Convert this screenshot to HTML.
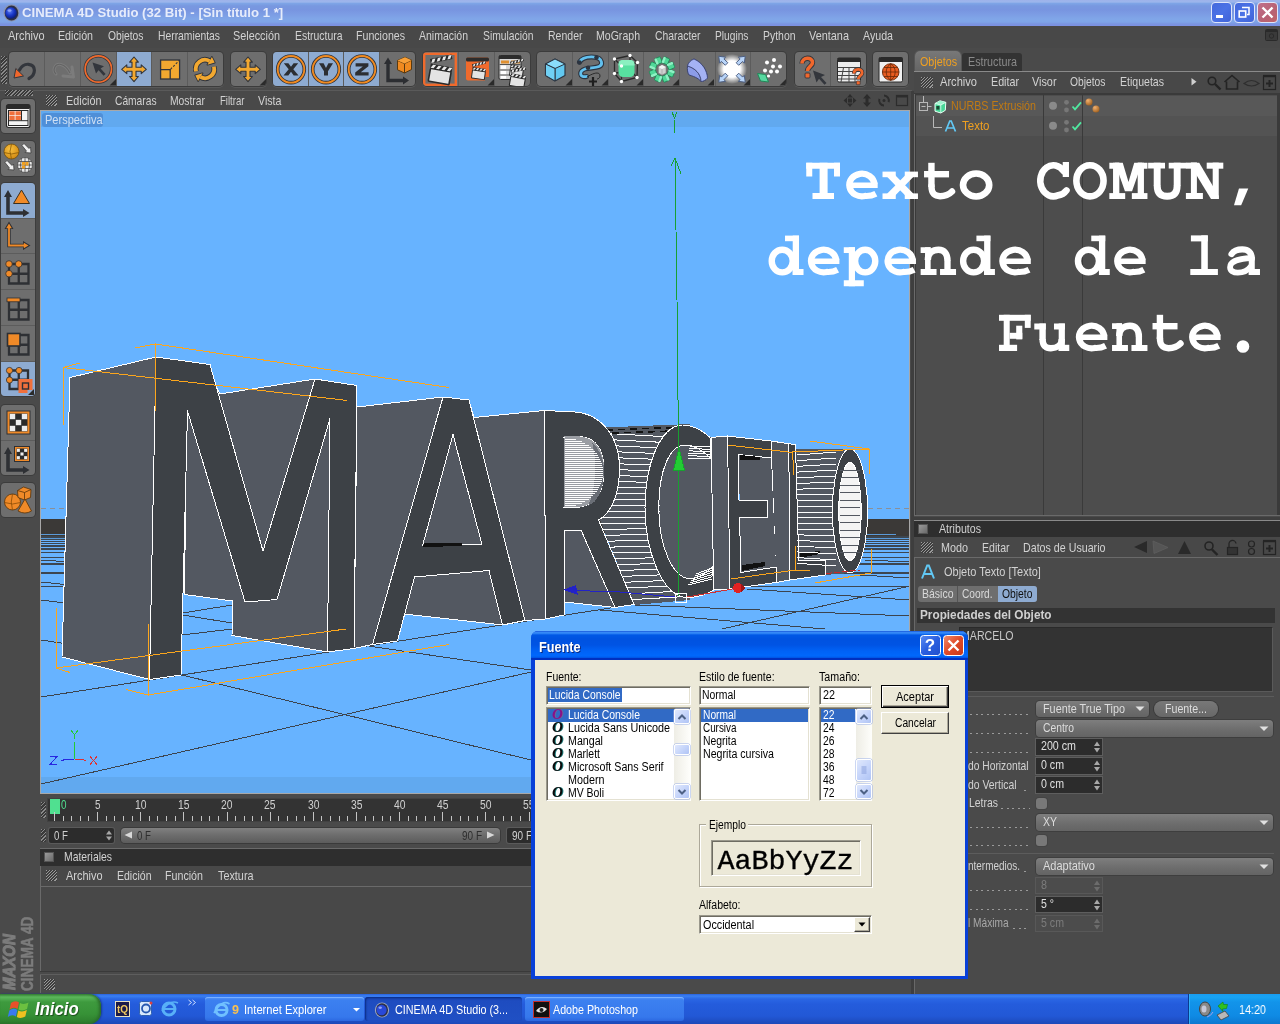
<!DOCTYPE html>
<html><head><meta charset="utf-8">
<style>
*{box-sizing:border-box;margin:0;padding:0}
html,body{width:1280px;height:1024px;overflow:hidden;background:#4a4a4a;font-family:"Liberation Sans",sans-serif;font-size:12px;color:#d0d0d0}
.a{position:absolute}
.t{position:absolute;white-space:nowrap;line-height:14px;font-size:12px;transform-origin:0 50%;transform:scaleX(.92);color:#d0d0d0}
svg{position:absolute;overflow:visible}
#root{position:absolute;left:0;top:0;width:1280px;height:1024px;will-change:transform}
</style></head><body><div id="root">
<!-- TITLE -->
<div class="a" style="left:0;top:0;width:1280px;height:26px;background:linear-gradient(#9eb2ea 0,#9cb6ec 2px,#7ea4e6 3.500px,#7898e0 6px,#7895e0 10px,#7c9ce4 14px,#80a6e8 19px,#7ea4e8 22px,#7a94e0 24px,#7c90e4 26px)"></div>
<svg style="left:3px;top:4px" width="17" height="18" viewBox="0 0 17 18"><defs><radialGradient id="gi" cx=".4" cy=".35" r=".7"><stop offset="0" stop-color="#5a7af0"/><stop offset=".5" stop-color="#1a38c8"/><stop offset="1" stop-color="#081870"/></radialGradient></defs><ellipse cx="8.5" cy="9" rx="8" ry="8.5" fill="#8c93a8"/><ellipse cx="8.5" cy="9" rx="6.8" ry="7.5" fill="#2a2f48"/><circle cx="8" cy="9" r="5.8" fill="url(#gi)"/><ellipse cx="6.5" cy="6.5" rx="2" ry="1.3" fill="#a8b8ff" opacity=".7"/></svg>
<div class="t" style="left:22px;top:4.8px;font-size:13px;line-height:15px;color:#e6ecfb;font-weight:bold;transform:scaleX(1.012);">CINEMA 4D Studio (32 Bit) - [Sin título 1 *]</div>
<div class="a" style="left:1211px;top:2px;width:21px;height:21px;border:1px solid #dfe6fa;border-radius:4px;background:linear-gradient(135deg,#4468dc,#4a72e6 50%,#3f62d8)"></div><svg style="left:1211px;top:2px" width="21" height="21" viewBox="0 0 21 21"><rect x="5" y="13" width="7" height="3" fill="#fff"/></svg>
<div class="a" style="left:1234px;top:2px;width:21px;height:21px;border:1px solid #dfe6fa;border-radius:4px;background:linear-gradient(135deg,#4468dc,#4a72e6 50%,#3f62d8)"></div><svg style="left:1234px;top:2px" width="21" height="21" viewBox="0 0 21 21"><path d="M8,5.5 h7 v7 h-2" fill="none" stroke="#fff" stroke-width="1.5"/><rect x="5.2" y="9" width="6.5" height="6" fill="none" stroke="#fff" stroke-width="1.6"/></svg>
<div class="a" style="left:1257px;top:2px;width:21px;height:21px;border:1px solid #dfe6fa;border-radius:4px;background:linear-gradient(135deg,#c0708a,#b86274 60%,#c06468)"></div><svg style="left:1257px;top:2px" width="21" height="21" viewBox="0 0 21 21"><path d="M5.5,5.5 L15.5,15.5 M15.5,5.5 L5.5,15.5" stroke="#fff" stroke-width="2.4"/></svg>
<!-- MENUBAR -->
<div class="a" style="left:0px;top:26px;width:1280px;height:22px;background:#484848;"></div>
<div class="t" style="left:8px;top:28.3px;font-size:13px;line-height:15px;color:#d2d2d2;transform:scaleX(0.842);">Archivo</div>
<div class="t" style="left:58px;top:28.3px;font-size:13px;line-height:15px;color:#d2d2d2;transform:scaleX(0.821);">Edición</div>
<div class="t" style="left:107.5px;top:28.3px;font-size:13px;line-height:15px;color:#d2d2d2;transform:scaleX(0.792);">Objetos</div>
<div class="t" style="left:157.5px;top:28.3px;font-size:13px;line-height:15px;color:#d2d2d2;transform:scaleX(0.794);">Herramientas</div>
<div class="t" style="left:233px;top:28.3px;font-size:13px;line-height:15px;color:#d2d2d2;transform:scaleX(0.833);">Selección</div>
<div class="t" style="left:294.5px;top:28.3px;font-size:13px;line-height:15px;color:#d2d2d2;transform:scaleX(0.802);">Estructura</div>
<div class="t" style="left:356px;top:28.3px;font-size:13px;line-height:15px;color:#d2d2d2;transform:scaleX(0.817);">Funciones</div>
<div class="t" style="left:419px;top:28.3px;font-size:13px;line-height:15px;color:#d2d2d2;transform:scaleX(0.807);">Animación</div>
<div class="t" style="left:482.5px;top:28.3px;font-size:13px;line-height:15px;color:#d2d2d2;transform:scaleX(0.794);">Simulación</div>
<div class="t" style="left:547.5px;top:28.3px;font-size:13px;line-height:15px;color:#d2d2d2;transform:scaleX(0.809);">Render</div>
<div class="t" style="left:596px;top:28.3px;font-size:13px;line-height:15px;color:#d2d2d2;transform:scaleX(0.812);">MoGraph</div>
<div class="t" style="left:654.5px;top:28.3px;font-size:13px;line-height:15px;color:#d2d2d2;transform:scaleX(0.797);">Character</div>
<div class="t" style="left:714.5px;top:28.3px;font-size:13px;line-height:15px;color:#d2d2d2;transform:scaleX(0.785);">Plugins</div>
<div class="t" style="left:762.5px;top:28.3px;font-size:13px;line-height:15px;color:#d2d2d2;transform:scaleX(0.803);">Python</div>
<div class="t" style="left:809px;top:28.3px;font-size:13px;line-height:15px;color:#d2d2d2;transform:scaleX(0.838);">Ventana</div>
<div class="t" style="left:863px;top:28.3px;font-size:13px;line-height:15px;color:#d2d2d2;transform:scaleX(0.819);">Ayuda</div>
<svg style="left:1265px;top:29px" width="13" height="12" viewBox="0 0 13 12"><rect x="0.5" y="0.5" width="12" height="11" rx="1" fill="#3a3a3a" stroke="#2a2a2a"/><rect x="1" y="1" width="11" height="2" fill="#2a2a2a"/><circle cx="6.5" cy="7" r="2.2" fill="none" stroke="#2a2a2a"/></svg>
<!-- TOOLBAR -->
<div class="a" style="left:1px;top:56px;width:6px;height:28px;background:repeating-linear-gradient(135deg,#8a8a8a 0,#8a8a8a 1px,#3a3a3a 1px,#3a3a3a 2.5px)"></div>
<div class="a" style="left:9.4px;top:52px;width:213.6px;height:34px;border-radius:4px;background:#6e6e6e;box-shadow:0 0 0 1px #3c3c3c,0 1px 0 1px #585858;overflow:hidden">
<svg style="left:0px;top:0" width="36" height="34" viewBox="0 0 36 34"><path d="M20,26.5 C27,23 27.5,13 19.5,12.3 C15,12 12,15 10.5,18" fill="none" stroke="#33363c" stroke-width="3.2" stroke-linecap="round"/><path d="M6.8,16.5 L14.5,24 L5,26 Z" fill="#f0672c" stroke="#33363c" stroke-width="1"/></svg>
<div class="a" style="left:35.1px;top:0;width:1px;height:34px;background:#5c5c5c"></div>
<svg style="left:35.6px;top:0" width="36" height="34" viewBox="0 0 36 34"><path d="M11,22 C7,18 10,11 16,12.5 C20,13.5 23,17 25,21 M27,15 L28.5,25 L18,24" fill="none" stroke="#7c7c7c" stroke-width="3" stroke-linecap="round" stroke-linejoin="round"/><path d="M11,22 C7,18 10,11 16,12.5 C20,13.5 23,17 25,21" fill="none" stroke="#646464" stroke-width="1.2"/></svg>
<div class="a" style="left:70.7px;top:0;width:1px;height:34px;background:#5c5c5c"></div>
<svg style="left:71.2px;top:0" width="36" height="34" viewBox="0 0 36 34"><circle cx="17.3" cy="17" r="13.2" fill="none" stroke="#33363c" stroke-width="3.2"/><circle cx="17.3" cy="17" r="13.2" fill="none" stroke="#f06a2c" stroke-width="1.7"/><path d="M11.5,10.5 L23,14.2 L19.6,16.4 L24.6,22 L22.6,23.8 L17.6,18.2 L15,21.5 Z" fill="#33363c"/><path d="M35,27 L35,33.5 L28.5,33.5 Z" fill="#2a2a2a"/></svg>
<div class="a" style="left:106.8px;top:0;width:35.6px;height:34px;background:#8eabd1"></div>
<div class="a" style="left:106.3px;top:0;width:1px;height:34px;background:#5c5c5c"></div>
<svg style="left:106.8px;top:0" width="36" height="34" viewBox="0 0 36 34"><g transform="translate(18,17.3)"><path d="M0,-12.3 L4.4,-7.2 L2,-7.2 L2,-2 L7.2,-2 L7.2,-4.4 L12.3,0 L7.2,4.4 L7.2,2 L2,2 L2,7.2 L4.4,7.2 L0,12.3 L-4.4,7.2 L-2,7.2 L-2,2 L-7.2,2 L-7.2,4.4 L-12.3,0 L-7.2,-4.4 L-7.2,-2 L-2,-2 L-2,-7.2 L-4.4,-7.2 Z" fill="#f2a830" stroke="#30343c" stroke-width="1.1" stroke-linejoin="round"/></g></svg>
<div class="a" style="left:141.9px;top:0;width:1px;height:34px;background:#5c5c5c"></div>
<svg style="left:142.4px;top:0" width="36" height="34" viewBox="0 0 36 34"><rect x="8.6" y="8" width="19" height="19" fill="#f2a830" stroke="#30343c" stroke-width="1.3"/><path d="M8.6,17.6 h9.6 v9.4" fill="none" stroke="#30343c" stroke-width="1.3"/><path d="M18.5,17.3 L27.3,8.4" stroke="#30343c" stroke-width="1.1" stroke-dasharray="2.2 1.6"/></svg>
<div class="a" style="left:177.5px;top:0;width:1px;height:34px;background:#5c5c5c"></div>
<svg style="left:178px;top:0" width="36" height="34" viewBox="0 0 36 34"><path d="M9.11,19.38 A9.2,9.2 0 0,1 22.60,9.03 M26.89,14.62 A9.2,9.2 0 0,1 13.40,24.97" fill="none" stroke="#30343c" stroke-width="5.600"/><path d="M24.90,5.05 L27.70,10.59 L20.50,12.67 Z M11.10,28.95 L8.30,23.41 L15.50,21.33 Z" fill="#30343c" stroke="#30343c" stroke-width="1.800" stroke-linejoin="round"/><path d="M9.11,19.38 A9.2,9.2 0 0,1 22.60,9.03 M26.89,14.62 A9.2,9.2 0 0,1 13.40,24.97" fill="none" stroke="#f2a830" stroke-width="3.800"/><path d="M24.90,5.05 L27.70,10.59 L20.50,12.67 Z M11.10,28.95 L8.30,23.41 L15.50,21.33 Z" fill="#f2a830"/></svg>
</div>
<div class="a" style="left:230.5px;top:52px;width:35.6px;height:34px;border-radius:4px;background:#6e6e6e;box-shadow:0 0 0 1px #3c3c3c,0 1px 0 1px #585858;overflow:hidden">
<svg style="left:0px;top:0" width="36" height="34" viewBox="0 0 36 34"><g transform="translate(17,17.3)"><path d="M0,-12.3 L4.4,-7.2 L2,-7.2 L2,-2 L7.2,-2 L7.2,-4.4 L12.3,0 L7.2,4.4 L7.2,2 L2,2 L2,7.2 L4.4,7.2 L0,12.3 L-4.4,7.2 L-2,7.2 L-2,2 L-7.2,2 L-7.2,4.4 L-12.3,0 L-7.2,-4.4 L-7.2,-2 L-2,-2 L-2,-7.2 L-4.4,-7.2 Z" fill="#f2a830" stroke="#30343c" stroke-width="1.1" stroke-linejoin="round"/></g><path d="M35,27 L35,33.5 L28.5,33.5 Z" fill="#2a2a2a"/></svg>
</div>
<div class="a" style="left:272.8px;top:52px;width:142.4px;height:34px;border-radius:4px;background:#6e6e6e;box-shadow:0 0 0 1px #3c3c3c,0 1px 0 1px #585858;overflow:hidden">
<div class="a" style="left:0px;top:0;width:35.6px;height:34px;background:#8eabd1"></div>
<svg style="left:0px;top:0" width="36" height="34" viewBox="0 0 36 34"><circle cx="18" cy="17.3" r="13.3" fill="none" stroke="#30343c" stroke-width="3.6"/><circle cx="18" cy="17.3" r="13.3" fill="none" stroke="#f08a20" stroke-width="1.9"/><path d="M10.8,11.2 h4.6 l2.6,3.6 l2.6,-3.6 h4.6 l-4.9,6 l5.2,6.4 h-4.8 l-2.7,-3.9 l-2.7,3.9 h-4.8 l5.2,-6.4 Z" fill="#2c2e32"/></svg>
<div class="a" style="left:35.6px;top:0;width:35.6px;height:34px;background:#8eabd1"></div>
<div class="a" style="left:35.1px;top:0;width:1px;height:34px;background:#5c5c5c"></div>
<svg style="left:35.6px;top:0" width="36" height="34" viewBox="0 0 36 34"><circle cx="18" cy="17.3" r="13.3" fill="none" stroke="#30343c" stroke-width="3.6"/><circle cx="18" cy="17.3" r="13.3" fill="none" stroke="#f08a20" stroke-width="1.9"/><path d="M11,11.2 h4.6 l2.4,4.8 l2.4,-4.8 h4.6 l-5,8 v4.4 h-4 v-4.4 Z" fill="#2c2e32"/></svg>
<div class="a" style="left:71.2px;top:0;width:35.6px;height:34px;background:#8eabd1"></div>
<div class="a" style="left:70.7px;top:0;width:1px;height:34px;background:#5c5c5c"></div>
<svg style="left:71.2px;top:0" width="36" height="34" viewBox="0 0 36 34"><circle cx="18" cy="17.3" r="13.3" fill="none" stroke="#30343c" stroke-width="3.6"/><circle cx="18" cy="17.3" r="13.3" fill="none" stroke="#f08a20" stroke-width="1.9"/><path d="M11.6,11.2 h12.8 v3 l-7.6,6 h7.8 v3.4 h-13.4 v-3 l7.6,-6 h-7.2 Z" fill="#2c2e32"/></svg>
<div class="a" style="left:106.3px;top:0;width:1px;height:34px;background:#5c5c5c"></div>
<svg style="left:106.8px;top:0" width="36" height="34" viewBox="0 0 36 34"><path d="M8,11 v17.5 h16" fill="none" stroke="#2c2e32" stroke-width="3.4"/><path d="M8,5.5 L12,12 L4,12 Z M29,28.5 L23,32.5 L23,24.5 Z" fill="#2c2e32"/><path d="M17.5,8.5 L25,5.2 L31.5,8.2 L31.5,17.5 L24.5,21 L17.5,17.8 Z" fill="#f08a20" stroke="#5a3a10" stroke-width="1" stroke-linejoin="round"/><path d="M17.5,8.5 L24.5,11.6 L31.5,8.2 M24.5,11.6 L24.5,21" fill="none" stroke="#5a3a10" stroke-width="1"/><path d="M17.5,8.5 L25,5.2 L31.5,8.2 L24.5,11.6 Z" fill="#f8a038"/></svg>
</div>
<div class="a" style="left:423px;top:52px;width:106.8px;height:34px;border-radius:4px;background:#6e6e6e;box-shadow:0 0 0 1px #3c3c3c,0 1px 0 1px #585858;overflow:hidden">
<svg style="left:0px;top:0" width="36" height="34" viewBox="0 0 36 34"><rect x="1.2" y="1.8" width="31.6" height="31" fill="none" stroke="#f06a2c" stroke-width="2.4"/><g transform="translate(17,20) scale(1) rotate(10)"><rect x="-10" y="-2" width="21" height="13" rx="1" fill="#e4e4e4" stroke="#2a2a2a" stroke-width="1.6"/><rect x="-10.5" y="-6.5" width="22" height="4.5" fill="#2a2a2a"/><path d="M-8,-6 l3,0 l-2,3.5 l-3,0 Z M-2.5,-6 l3,0 l-2,3.5 l-3,0 Z M3,-6 l3,0 l-2,3.5 l-3,0 Z M8.5,-6 l3,0 l-2,3.5 l-3,0 Z" fill="#e8e8e8"/><g transform="rotate(-22 -10 -7)"><rect x="-10.5" y="-11.5" width="22" height="4.5" fill="#2a2a2a"/><path d="M-8,-11 l3,0 l-2,3.5 l-3,0 Z M-2.5,-11 l3,0 l-2,3.5 l-3,0 Z M3,-11 l3,0 l-2,3.5 l-3,0 Z M8.5,-11 l3,0 l-2,3.5 l-3,0 Z" fill="#e8e8e8"/></g></g></svg>
<div class="a" style="left:35.1px;top:0;width:1px;height:34px;background:#5c5c5c"></div>
<svg style="left:35.6px;top:0" width="36" height="34" viewBox="0 0 36 34"><rect x="7" y="5.5" width="23" height="23" rx="2" fill="#f06a2c"/><rect x="7" y="5.5" width="23" height="4" rx="1.5" fill="#2c2c2c"/><g transform="translate(19.5,20) scale(0.62) rotate(8)"><rect x="-10" y="-2" width="21" height="13" rx="1" fill="#e4e4e4" stroke="#2a2a2a" stroke-width="1.6"/><rect x="-10.5" y="-6.5" width="22" height="4.5" fill="#2a2a2a"/><path d="M-8,-6 l3,0 l-2,3.5 l-3,0 Z M-2.5,-6 l3,0 l-2,3.5 l-3,0 Z M3,-6 l3,0 l-2,3.5 l-3,0 Z M8.5,-6 l3,0 l-2,3.5 l-3,0 Z" fill="#e8e8e8"/><g transform="rotate(-22 -10 -7)"><rect x="-10.5" y="-11.5" width="22" height="4.5" fill="#2a2a2a"/><path d="M-8,-11 l3,0 l-2,3.5 l-3,0 Z M-2.5,-11 l3,0 l-2,3.5 l-3,0 Z M3,-11 l3,0 l-2,3.5 l-3,0 Z M8.5,-11 l3,0 l-2,3.5 l-3,0 Z" fill="#e8e8e8"/></g></g><path d="M26,25 h4 v4 h-4 Z" fill="#6e6e6e"/><path d="M35,27 L35,33.5 L28.5,33.5 Z" fill="#2a2a2a"/></svg>
<div class="a" style="left:70.7px;top:0;width:1px;height:34px;background:#5c5c5c"></div>
<svg style="left:71.2px;top:0" width="36" height="34" viewBox="0 0 36 34"><rect x="5" y="3.5" width="22" height="24" rx="1.5" fill="#d8d8d8" stroke="#2c2c2c" stroke-width="1"/><rect x="5" y="3.5" width="22" height="3.5" fill="#2c2c2c"/><rect x="7" y="8.5" width="8" height="3" fill="#e09030"/><rect x="17" y="8.5" width="9" height="3" fill="#c07820"/><rect x="7" y="13.5" width="5" height="3.4" fill="#fff"/><rect x="7" y="19" width="5" height="3.4" fill="#fff"/><rect x="7" y="24" width="5" height="2.6" fill="#fff"/><path d="M5.5,12.5 h21 M5.5,18 h21 M5.5,23 h21" stroke="#555" stroke-width="1"/><g transform="translate(22.5,17.5) scale(0.62) rotate(8)"><rect x="-10" y="-2" width="21" height="13" rx="1" fill="#e4e4e4" stroke="#2a2a2a" stroke-width="1.6"/><rect x="-10.5" y="-6.5" width="22" height="4.5" fill="#2a2a2a"/><path d="M-8,-6 l3,0 l-2,3.5 l-3,0 Z M-2.5,-6 l3,0 l-2,3.5 l-3,0 Z M3,-6 l3,0 l-2,3.5 l-3,0 Z M8.5,-6 l3,0 l-2,3.5 l-3,0 Z" fill="#e8e8e8"/><g transform="rotate(-22 -10 -7)"><rect x="-10.5" y="-11.5" width="22" height="4.5" fill="#2a2a2a"/><path d="M-8,-11 l3,0 l-2,3.5 l-3,0 Z M-2.5,-11 l3,0 l-2,3.5 l-3,0 Z M3,-11 l3,0 l-2,3.5 l-3,0 Z M8.5,-11 l3,0 l-2,3.5 l-3,0 Z" fill="#e8e8e8"/></g></g><g transform="translate(23.5,27) scale(0.7) rotate(10)"><rect x="-10" y="-2" width="21" height="13" rx="1" fill="#e4e4e4" stroke="#2a2a2a" stroke-width="1.6"/><rect x="-10.5" y="-6.5" width="22" height="4.5" fill="#2a2a2a"/><path d="M-8,-6 l3,0 l-2,3.5 l-3,0 Z M-2.5,-6 l3,0 l-2,3.5 l-3,0 Z M3,-6 l3,0 l-2,3.5 l-3,0 Z M8.5,-6 l3,0 l-2,3.5 l-3,0 Z" fill="#e8e8e8"/><g transform="rotate(-22 -10 -7)"><rect x="-10.5" y="-11.5" width="22" height="4.5" fill="#2a2a2a"/><path d="M-8,-11 l3,0 l-2,3.5 l-3,0 Z M-2.5,-11 l3,0 l-2,3.5 l-3,0 Z M3,-11 l3,0 l-2,3.5 l-3,0 Z M8.5,-11 l3,0 l-2,3.5 l-3,0 Z" fill="#e8e8e8"/></g></g></svg>
</div>
<div class="a" style="left:537px;top:52px;width:249.2px;height:34px;border-radius:4px;background:#6e6e6e;box-shadow:0 0 0 1px #3c3c3c,0 1px 0 1px #585858;overflow:hidden">
<svg style="left:0px;top:0" width="36" height="34" viewBox="0 0 36 34"><path d="M8.5,12 L18,7 L28,12 L28,23.5 L18,29 L8.5,23.5 Z" fill="#62c8f0" stroke="#2c3440" stroke-width="1.2" stroke-linejoin="round"/><path d="M8.5,12 L18,7 L28,12 L18,16.5 Z" fill="#8adcfa" stroke="#2c3440" stroke-width="1" stroke-linejoin="round"/><path d="M18,16.5 V29" stroke="#2c3440" stroke-width="1"/><path d="M8.5,12 L18,16.5 L18,29 L8.5,23.5 Z" fill="#70d0f4" stroke="#2c3440" stroke-width="1" stroke-linejoin="round"/><path d="M35,27 L35,33.5 L28.5,33.5 Z" fill="#2a2a2a"/></svg>
<div class="a" style="left:35.1px;top:0;width:1px;height:34px;background:#5c5c5c"></div>
<svg style="left:35.6px;top:0" width="36" height="34" viewBox="0 0 36 34"><path d="M6.5,10 C10,3.5 27,3 28.5,10 C30,17 18,15 12,17 C6,19 6,26 13.5,24.5" fill="none" stroke="#2c3440" stroke-width="5" stroke-linecap="round"/><path d="M6.5,10 C10,3.5 27,3 28.5,10 C30,17 18,15 12,17 C6,19 6,26 13.5,24.5" fill="none" stroke="#62c0ee" stroke-width="2.8" stroke-linecap="round"/><circle cx="6.5" cy="10.5" r="2.3" fill="#2c3440"/><circle cx="23.5" cy="5.5" r="2.3" fill="#2c3440"/><circle cx="15" cy="15.8" r="2.3" fill="#2c3440"/><path d="M14,25 C20,21 27,19 27,24 C27,26 25,27 24,27" fill="none" stroke="#2a2a2a" stroke-width="1"/><path d="M20,25 v9 M16,29.5 h8" stroke="#1e1e1e" stroke-width="2.2"/><path d="M35,27 L35,33.5 L28.5,33.5 Z" fill="#2a2a2a"/></svg>
<div class="a" style="left:70.7px;top:0;width:1px;height:34px;background:#5c5c5c"></div>
<svg style="left:71.2px;top:0" width="36" height="34" viewBox="0 0 36 34"><path d="M6.5,7 L22,3.5 L29.5,10.5 L29,25.5 L13.5,29.5 L6.5,21.5 Z M6.5,7 L13.5,14 L29.5,10.5 M13.5,14 L13.5,29.5 M22,3.5 L22,18 L29,25.5 M22,18 L6.5,21.5" fill="none" stroke="#2a2a2a" stroke-width="1.3"/><rect x="10.5" y="8" width="16" height="17" rx="4.5" fill="#58e0a0"/><path d="M10.5,12 q0,-4 4.5,-4 h7 q4.500,0 4.500,4.500 v1 h-16 Z" fill="#8af0c0"/><g fill="#fff"><circle cx="6.500" cy="7" r="1.7"/><circle cx="22" cy="3.500" r="1.700"/><circle cx="29.500" cy="10.500" r="1.7"/><circle cx="13.500" cy="14" r="1.7"/><circle cx="6.5" cy="21.5" r="1.7"/><circle cx="13.5" cy="29.5" r="1.7"/><circle cx="29" cy="25.500" r="1.7"/></g><path d="M35,27 L35,33.5 L28.5,33.5 Z" fill="#2a2a2a"/></svg>
<div class="a" style="left:106.3px;top:0;width:1px;height:34px;background:#5c5c5c"></div>
<svg style="left:106.8px;top:0" width="36" height="34" viewBox="0 0 36 34"><g transform="translate(26.7866,21.1118) rotate(22)"><rect x="-3.2" y="-3.2" width="6.4" height="6.4" rx="1" fill="#50d898" stroke="#208858" stroke-width=".8"/><rect x="-3.2" y="-3.2" width="6.4" height="2.4" rx="1" fill="#90f0c4"/></g><g transform="translate(21.6592,26.267) rotate(67)"><rect x="-3.2" y="-3.2" width="6.4" height="6.4" rx="1" fill="#50d898" stroke="#208858" stroke-width=".8"/><rect x="-3.2" y="-3.2" width="6.4" height="2.4" rx="1" fill="#90f0c4"/></g><g transform="translate(14.3882,26.2866) rotate(112)"><rect x="-3.2" y="-3.2" width="6.4" height="6.4" rx="1" fill="#50d898" stroke="#208858" stroke-width=".8"/><rect x="-3.2" y="-3.2" width="6.4" height="2.4" rx="1" fill="#90f0c4"/></g><g transform="translate(9.23297,21.1591) rotate(157)"><rect x="-3.2" y="-3.2" width="6.4" height="6.4" rx="1" fill="#50d898" stroke="#208858" stroke-width=".8"/><rect x="-3.2" y="-3.2" width="6.4" height="2.4" rx="1" fill="#90f0c4"/></g><g transform="translate(9.21339,13.8881) rotate(202)"><rect x="-3.2" y="-3.2" width="6.4" height="6.4" rx="1" fill="#50d898" stroke="#208858" stroke-width=".8"/><rect x="-3.2" y="-3.2" width="6.4" height="2.4" rx="1" fill="#90f0c4"/></g><g transform="translate(14.3409,8.73296) rotate(247)"><rect x="-3.2" y="-3.2" width="6.4" height="6.4" rx="1" fill="#50d898" stroke="#208858" stroke-width=".8"/><rect x="-3.2" y="-3.2" width="6.4" height="2.4" rx="1" fill="#90f0c4"/></g><g transform="translate(21.6119,8.7134) rotate(292)"><rect x="-3.2" y="-3.2" width="6.4" height="6.4" rx="1" fill="#50d898" stroke="#208858" stroke-width=".8"/><rect x="-3.2" y="-3.2" width="6.4" height="2.4" rx="1" fill="#90f0c4"/></g><g transform="translate(26.7671,13.8409) rotate(337)"><rect x="-3.2" y="-3.2" width="6.4" height="6.4" rx="1" fill="#50d898" stroke="#208858" stroke-width=".8"/><rect x="-3.2" y="-3.2" width="6.4" height="2.4" rx="1" fill="#90f0c4"/></g><path d="M14.500,15 L18,13 L22,15 L22,21 L18,23 L14.500,21 Z" fill="#d0d0d0" stroke="#888" stroke-width=".6"/><path d="M14.500,15 L18,13 L22,15 L18,17 Z" fill="#f4f4f4"/><path d="M18,17 v6" stroke="#999" stroke-width=".6"/><path d="M35,27 L35,33.5 L28.5,33.5 Z" fill="#2a2a2a"/></svg>
<div class="a" style="left:141.9px;top:0;width:1px;height:34px;background:#5c5c5c"></div>
<svg style="left:142.4px;top:0" width="36" height="34" viewBox="0 0 36 34"><path d="M8.500,14 C9,11 12,8 15,7 C24,11 28,19 28.500,26 C27,28 24,29.500 22,29.500 C20,27 17,25 10,23 C8.500,21 8,17 8.500,14 Z" fill="#8c9ce8" stroke="#3c4470" stroke-width="1" stroke-linejoin="round"/><path d="M8.500,14 C16,16 22,22 22,29.500" fill="none" stroke="#3c4470" stroke-width="1"/><path d="M8.500,14 C9,11 12,8 15,7 C24,11 28,19 28.500,26 C27,28 24,29.500 22,29.500 C22,22 16,16 8.500,14 Z" fill="#a4b2f4" stroke="#3c4470" stroke-width=".8"/><path d="M35,27 L35,33.5 L28.5,33.5 Z" fill="#2a2a2a"/></svg>
<div class="a" style="left:177.5px;top:0;width:1px;height:34px;background:#5c5c5c"></div>
<svg style="left:178px;top:0" width="36" height="34" viewBox="0 0 36 34"><defs><radialGradient id="gw"><stop offset="0" stop-color="#fff"/><stop offset=".55" stop-color="#fff"/><stop offset="1" stop-color="#fff" stop-opacity="0"/></radialGradient></defs><circle cx="17" cy="17" r="15" fill="url(#gw)"/><g transform="translate(8,8.5) rotate(-45)"><path d="M0,-6 L4.2,-0.5 L1.8,-0.5 L1.8,5 L-1.8,5 L-1.8,-0.5 L-4.2,-0.5 Z" fill="#b8d4f8" stroke="#4a5c80" stroke-width=".9" stroke-linejoin="round"/></g><g transform="translate(26,8.5) rotate(45)"><path d="M0,-6 L4.2,-0.5 L1.8,-0.5 L1.8,5 L-1.8,5 L-1.8,-0.5 L-4.2,-0.5 Z" fill="#b8d4f8" stroke="#4a5c80" stroke-width=".9" stroke-linejoin="round"/></g><g transform="translate(8,26) rotate(-135)"><path d="M0,-6 L4.2,-0.5 L1.8,-0.5 L1.8,5 L-1.8,5 L-1.8,-0.5 L-4.2,-0.5 Z" fill="#b8d4f8" stroke="#4a5c80" stroke-width=".9" stroke-linejoin="round"/></g><g transform="translate(26,26) rotate(135)"><path d="M0,-6 L4.2,-0.5 L1.8,-0.5 L1.8,5 L-1.8,5 L-1.8,-0.5 L-4.2,-0.5 Z" fill="#b8d4f8" stroke="#4a5c80" stroke-width=".9" stroke-linejoin="round"/></g><path d="M35,27 L35,33.5 L28.5,33.5 Z" fill="#2a2a2a"/></svg>
<div class="a" style="left:213.1px;top:0;width:1px;height:34px;background:#5c5c5c"></div>
<svg style="left:213.6px;top:0" width="36" height="34" viewBox="0 0 36 34"><g fill="#fff"><circle cx="16" cy="10.500" r="2"/><circle cx="23" cy="8" r="2"/><circle cx="22" cy="14.500" r="2"/><circle cx="29" cy="14.500" r="2"/><circle cx="14" cy="18.500" r="2"/><circle cx="20" cy="19.500" r="2"/><circle cx="26" cy="19.500" r="2"/><circle cx="13.500" cy="24" r="1.600"/><circle cx="17.500" cy="24" r="1.600"/></g><path d="M6.500,21.500 L14.500,22.500 L17.500,30 L9.500,29 Z" fill="#58d8a0" stroke="#208858" stroke-width="1"/><path d="M35,27 L35,33.5 L28.5,33.5 Z" fill="#2a2a2a"/></svg>
</div>
<div class="a" style="left:795px;top:52px;width:71.2px;height:34px;border-radius:4px;background:#6e6e6e;box-shadow:0 0 0 1px #3c3c3c,0 1px 0 1px #585858;overflow:hidden">
<svg style="left:0px;top:0" width="36" height="34" viewBox="0 0 36 34"><path d="M7,11.500 C7,5 17.500,4.500 17.500,10.500 C17.500,14.500 12.500,14.500 12.500,19" fill="none" stroke="#33363c" stroke-width="5.400"/><path d="M7,11.500 C7,5 17.500,4.500 17.500,10.500 C17.500,14.500 12.500,14.500 12.500,19" fill="none" stroke="#f0672c" stroke-width="3.600"/><rect x="10" y="21" width="5" height="5" rx="1" fill="#f0672c" stroke="#33363c" stroke-width=".900"/><path d="M18,18.500 L30,23 L26,25 L31.500,31 L29.500,32.800 L24,26.800 L21.500,30.500 Z" fill="#33363c"/></svg>
<div class="a" style="left:35.1px;top:0;width:1px;height:34px;background:#5c5c5c"></div>
<svg style="left:35.6px;top:0" width="36" height="34" viewBox="0 0 36 34"><rect x="6.500" y="6" width="23" height="24" rx="1.500" fill="#ececec" stroke="#2a2a2a" stroke-width="1"/><rect x="6.500" y="6" width="23" height="4" fill="#2a2a2a"/><path d="M7,15.500 h22 M7,19.500 h22 M7,23.500 h22 M7,27 h22 M12.500,15.500 L10,30 M18,15.500 V30 M24,15.500 V30" stroke="#444" stroke-width="1"/><g transform="translate(17.500,12.500) scale(.78)"><path d="M7,11.500 C7,5 17.500,4.500 17.500,10.500 C17.500,14.500 12.500,14.500 12.500,19" fill="none" stroke="#33363c" stroke-width="5.400"/><path d="M7,11.500 C7,5 17.500,4.500 17.500,10.500 C17.500,14.500 12.500,14.500 12.500,19" fill="none" stroke="#f0672c" stroke-width="3.600"/><rect x="10" y="21" width="5" height="5" rx="1" fill="#f0672c" stroke="#33363c" stroke-width=".900"/></g></svg>
</div>
<div class="a" style="left:872.8px;top:52px;width:35.6px;height:34px;border-radius:4px;background:#6e6e6e;box-shadow:0 0 0 1px #3c3c3c,0 1px 0 1px #585858;overflow:hidden">
<svg style="left:0px;top:0" width="36" height="34" viewBox="0 0 36 34"><rect x="6" y="5.500" width="23.500" height="24.500" rx="1.500" fill="#f0f0f0" stroke="#2a2a2a" stroke-width="1"/><rect x="6" y="5.500" width="23.500" height="4.500" fill="#2a2a2a"/><circle cx="17.700" cy="20" r="8.300" fill="#e85c20" stroke="#6a2808" stroke-width=".9"/><path d="M9.500,20 h16.500 M11,15.500 h13.500 M11,24.500 h13.500 M17.700,11.700 v16.600 M17.700,11.700 c-6,4 -6,12.500 0,16.600 M17.700,11.700 c6,4 6,12.500 0,16.600" fill="none" stroke="#6a2808" stroke-width=".8"/></svg>
</div>
<div class="a" style="left:0px;top:90px;width:912px;height:1px;background:#5a5a5a;"></div>
<!-- LEFTBAR -->
<div class="a" style="left:5px;top:90px;width:28px;height:6px;background:repeating-linear-gradient(135deg,#8a8a8a 0,#8a8a8a 1px,#3a3a3a 1px,#3a3a3a 2.5px)"></div>
<div class="a" style="left:1.200px;top:98.6px;width:33.800px;height:34.7px;border-radius:4px;background:#6e6e6e;box-shadow:0 0 0 1px #3c3c3c;overflow:hidden">
<svg style="left:0;top:0px" width="34" height="36" viewBox="0 0 34 36"><rect x="5.500" y="5.500" width="23.500" height="23" rx="2" fill="#f4f4f4" stroke="#2a2a2a" stroke-width="1.200"/><rect x="5.500" y="5.500" width="23.500" height="4.500" rx="1.500" fill="#2a2a2a"/><rect x="7.500" y="11.500" width="19.500" height="15" fill="none" stroke="#2a2a2a" stroke-width="1"/><rect x="8.300" y="12.300" width="5.400" height="4" fill="#f0703c"/><rect x="14.500" y="12.300" width="5.400" height="4" fill="#f0703c"/><rect x="8.300" y="17" width="5.400" height="4" fill="#f0703c"/><rect x="14.500" y="17" width="5.400" height="4" fill="#f0703c"/><path d="M20.500,11.500 v10 M7.500,21.700 h19.500" stroke="#2a2a2a" stroke-width="1"/></svg>
</div>
<div class="a" style="left:1.200px;top:141px;width:33.800px;height:34.7px;border-radius:4px;background:#6e6e6e;box-shadow:0 0 0 1px #3c3c3c;overflow:hidden">
<svg style="left:0;top:0px" width="34" height="36" viewBox="0 0 34 36"><defs><radialGradient id="gs" cx=".4" cy=".35" r=".7"><stop offset="0" stop-color="#f8c040"/><stop offset="1" stop-color="#d08810"/></radialGradient></defs><circle cx="10.500" cy="10.500" r="7.500" fill="url(#gs)" stroke="#6a4808" stroke-width=".7"/><path d="M3,11.500 q7.500,3 15,0 M10.500,3 q-3,7.500 0,15" fill="none" stroke="#8a5c08" stroke-width=".8"/><circle cx="24" cy="24" r="7.500" fill="#e8e8e8" stroke="#444" stroke-width=".7"/><path d="M16.500,24 h15 M17.500,20.500 h13 M17.500,27.500 h13 M24,16.500 v15 M20.500,17.500 q-2,6.500 0,13 M27.500,17.500 q2,6.500 0,13" fill="none" stroke="#444" stroke-width=".8"/><rect x="21" y="21" width="3" height="3.500" fill="#f0a020"/><rect x="24.500" y="21" width="3" height="3.500" fill="#f0a020"/><rect x="21" y="25" width="3" height="2.500" fill="#f0a020"/><path d="M21,4.500 l2,-2 l5,5 l1.500,-1.500 l0.500,6 l-6,-0.500 l1.500,-1.500 Z M4,21.500 l2,-2 l5,5 l1.500,-1.500 l0.500,6 l-6,-0.500 l1.500,-1.500 Z" fill="#f0f0f0" stroke="#333" stroke-width=".7"/></svg>
</div>
<div class="a" style="left:1.200px;top:182.5px;width:33.800px;height:213.2px;border-radius:4px;background:#6e6e6e;box-shadow:0 0 0 1px #3c3c3c;overflow:hidden">
<div class="a" style="left:0;top:0px;width:34px;height:35.7px;background:#8eabd1"></div>
<svg style="left:0;top:0px" width="34" height="36" viewBox="0 0 34 36"><path d="M7,13 v17 h16" fill="none" stroke="#2e3034" stroke-width="3.600"/><path d="M7,7 L11,14 L3,14 Z M28.500,30 L22,34 L22,26 Z" fill="#2e3034"/><path d="M20.500,7 L28.500,20.500 L12.500,20.500 Z" fill="#f08a28" stroke="#3a3020" stroke-width="1"/></svg>
<div class="a" style="left:0;top:35.2px;width:34px;height:1px;background:#5c5c5c"></div>
<svg style="left:0;top:35.7px" width="34" height="36" viewBox="0 0 34 36"><path d="M8,9 v18.500 h15" fill="none" stroke="#2e3034" stroke-width="3.400"/><path d="M8,3.500 L12.500,11 L3.500,11 Z M29.500,27.500 L22,32 L22,23 Z" fill="#2e3034"/><path d="M8,10 v17.500 h15" fill="none" stroke="#f08a28" stroke-width="1.800"/><path d="M8,5.500 L10.800,10.300 L5.200,10.300 Z M27.500,27.500 L22.800,30.300 L22.800,24.700 Z" fill="#f08a28"/></svg>
<div class="a" style="left:0;top:70.9px;width:34px;height:1px;background:#5c5c5c"></div>
<svg style="left:0;top:71.4px" width="34" height="36" viewBox="0 0 34 36"><path d="M8,10 h19.5 v19.5 h-19.5 Z M8,19.75 h19.5 M17.75,10 v19.5" fill="none" stroke="#2e3034" stroke-width="2.3"/><circle cx="8" cy="10" r="3.300" fill="#f08a28" stroke="#2e3034" stroke-width=".8"/><circle cx="17.700" cy="10" r="3.300" fill="#f08a28" stroke="#2e3034" stroke-width=".8"/><circle cx="8" cy="19.700" r="3.300" fill="#f08a28" stroke="#2e3034" stroke-width=".8"/></svg>
<div class="a" style="left:0;top:106.6px;width:34px;height:1px;background:#5c5c5c"></div>
<svg style="left:0;top:107.1px" width="34" height="36" viewBox="0 0 34 36"><path d="M8,10 h19.5 v19.5 h-19.5 Z M8,19.75 h19.5 M17.75,10 v19.5" fill="none" stroke="#2e3034" stroke-width="2.3"/><rect x="6" y="8" width="13" height="3.800" fill="#f08a28" stroke="#2e3034" stroke-width=".8"/></svg>
<div class="a" style="left:0;top:142.3px;width:34px;height:1px;background:#5c5c5c"></div>
<svg style="left:0;top:142.8px" width="34" height="36" viewBox="0 0 34 36"><path d="M8,10 h19.5 v19.5 h-19.5 Z M8,19.75 h19.5 M17.75,10 v19.5" fill="none" stroke="#2e3034" stroke-width="2.3"/><rect x="6.500" y="8.500" width="12.500" height="12.500" fill="#f08a28" stroke="#2e3034" stroke-width="1.600"/></svg>
<div class="a" style="left:0;top:178.5px;width:34px;height:35.7px;background:#8eabd1"></div>
<div class="a" style="left:0;top:178px;width:34px;height:1px;background:#5c5c5c"></div>
<svg style="left:0;top:178.5px" width="34" height="36" viewBox="0 0 34 36"><path d="M8.5,9.5 h18.5 v18.5 h-18.5 Z M8.5,18.75 h18.5 M17.75,9.5 v18.5" fill="none" stroke="#2e3034" stroke-width="2.3"/><circle cx="8.500" cy="9.500" r="3.100" fill="#f08a28" stroke="#2e3034" stroke-width=".8"/><circle cx="18" cy="9.500" r="3.100" fill="#f08a28" stroke="#2e3034" stroke-width=".8"/><circle cx="8.500" cy="19" r="3.100" fill="#f08a28" stroke="#2e3034" stroke-width=".8"/><rect x="17.500" y="18" width="14" height="14" fill="#f0703c"/><rect x="21.500" y="22" width="6" height="6" fill="none" stroke="#2e3034" stroke-width="1.400"/><path d="M26.500,29 h5 v3 h-5 Z" fill="#8eabd1"/><path d="M33,28 L33,34 L27,34 Z" fill="#2a2a2a"/></svg>
</div>
<div class="a" style="left:1.200px;top:405px;width:33.800px;height:70.4px;border-radius:4px;background:#6e6e6e;box-shadow:0 0 0 1px #3c3c3c;overflow:hidden">
<svg style="left:0;top:0px" width="34" height="36" viewBox="0 0 34 36"><rect x="6" y="6" width="23" height="23" fill="#f08a28" stroke="#2e3034" stroke-width="1"/><rect x="8.5" y="8.5" width="18" height="18" fill="#2a2a2a"/><rect x="8.8" y="8.8" width="5.4" height="5.4" fill="#ececec"/><rect x="8.8" y="20.8" width="5.4" height="5.4" fill="#ececec"/><rect x="14.8" y="14.8" width="5.4" height="5.4" fill="#ececec"/><rect x="20.8" y="8.8" width="5.4" height="5.4" fill="#ececec"/><rect x="20.8" y="20.8" width="5.4" height="5.4" fill="#ececec"/></svg>
<div class="a" style="left:0;top:35.2px;width:34px;height:1px;background:#5c5c5c"></div>
<svg style="left:0;top:35.7px" width="34" height="36" viewBox="0 0 34 36"><path d="M7,12 v17 h16" fill="none" stroke="#2e3034" stroke-width="3.600"/><path d="M7,6 L11,13 L3,13 Z M28.500,29 L22,33 L22,25 Z" fill="#2e3034"/><rect x="13.500" y="5.500" width="15" height="15" fill="#f08a28" stroke="#2e3034" stroke-width="1"/><rect x="15.5" y="7.5" width="11" height="11" fill="#2a2a2a"/><rect x="15.8" y="7.8" width="3.06667" height="3.06667" fill="#ececec"/><rect x="15.8" y="15.1333" width="3.06667" height="3.06667" fill="#ececec"/><rect x="19.4667" y="11.4667" width="3.06667" height="3.06667" fill="#ececec"/><rect x="23.1333" y="7.8" width="3.06667" height="3.06667" fill="#ececec"/><rect x="23.1333" y="15.1333" width="3.06667" height="3.06667" fill="#ececec"/></svg>
</div>
<div class="a" style="left:1.200px;top:482.5px;width:33.800px;height:34.7px;border-radius:4px;background:#6e6e6e;box-shadow:0 0 0 1px #3c3c3c;overflow:hidden">
<svg style="left:0;top:0px" width="34" height="36" viewBox="0 0 34 36"><circle cx="11.500" cy="19" r="8" fill="#f08a28" stroke="#5a3408" stroke-width=".8"/><path d="M3.500,19.500 q8,3 16,0 M11.500,11 q-2.500,8 0,16" fill="none" stroke="#8a4c08" stroke-width=".8"/><path d="M16.500,7.500 L22.500,4 L30,6.500 L29.500,14.500 L23.500,17 L17,14.500 Z" fill="#f08a28" stroke="#5a3408" stroke-width=".8" stroke-linejoin="round"/><path d="M16.500,7.500 L23.500,9.500 L30,6.500 M23.500,9.500 V17" fill="none" stroke="#5a3408" stroke-width=".8"/><path d="M24,16 L30.500,28 Q24,32 17,28 Z" fill="#f08a28" stroke="#5a3408" stroke-width=".8" stroke-linejoin="round"/></svg>
</div>
<div class="a" style="left:1px;top:990px;transform-origin:0 0;transform:rotate(-90deg);white-space:nowrap;font-weight:bold;font-style:italic;font-size:17px;line-height:17px;color:#7c7c7c;-webkit-text-stroke:1.100px #7c7c7c;letter-spacing:0"><span style="display:inline-block;transform-origin:0 50%;transform:scaleX(.880)">MAXON</span></div>
<div class="a" style="left:20px;top:990.500px;transform-origin:0 0;transform:rotate(-90deg);white-space:nowrap;font-weight:bold;font-size:16px;line-height:16px;color:#7c7c7c;-webkit-text-stroke:.500px #7c7c7c"><span style="display:inline-block;transform-origin:0 50%;transform:scaleX(.850)">CINEMA 4D</span></div>
<!-- VPMENU -->
<div class="a" style="left:40px;top:91px;width:871px;height:19px;background:#494949;"></div>
<div class="a" style="left:46px;top:95px;width:11px;height:11px;background:repeating-linear-gradient(135deg,#9a9a9a 0,#9a9a9a 1px,#3e3e3e 1px,#3e3e3e 2.200px)"></div>
<div class="t" style="left:66px;top:92.8px;font-size:13px;line-height:15px;color:#d2d2d2;transform:scaleX(0.832);">Edición</div>
<div class="t" style="left:115px;top:92.8px;font-size:13px;line-height:15px;color:#d2d2d2;transform:scaleX(0.787);">Cámaras</div>
<div class="t" style="left:170px;top:92.8px;font-size:13px;line-height:15px;color:#d2d2d2;transform:scaleX(0.794);">Mostrar</div>
<div class="t" style="left:219.5px;top:92.8px;font-size:13px;line-height:15px;color:#d2d2d2;transform:scaleX(0.738);">Filtrar</div>
<div class="t" style="left:258px;top:92.8px;font-size:13px;line-height:15px;color:#d2d2d2;transform:scaleX(0.820);">Vista</div>
<svg style="left:842px;top:93px" width="68" height="16" viewBox="842 93 68 16"><g fill="#2c2c2c" stroke="none"><path d="M850,94 l3,3.500 h-6 Z M850,107 l3,-3.500 h-6 Z M843.500,100.500 l3.500,-3 v6 Z M856.500,100.500 l-3.500,-3 v6 Z"/><rect x="848" y="98.500" width="4" height="4"/><path d="M867,94 l4,4.500 h-2.500 v4 h2.500 l-4,4.500 l-4,-4.500 h2.500 v-4 h-2.500 Z"/><path d="M884,94.500 a6,6 0 0,1 5.500,8 l-1.800,-.8 a4,4 0 0,0 -3.700,-5.200 Z M884,106.500 a6,6 0 0,1 -5.500,-8 l1.800,.8 a4,4 0 0,0 3.700,5.200 Z"/><circle cx="884" cy="100.500" r="1.500"/></g><rect x="896.500" y="95.500" width="11" height="10" fill="none" stroke="#2c2c2c" stroke-width="1.200"/><rect x="896" y="95" width="12" height="2.500" fill="#2c2c2c"/></svg>
<!-- VIEWPORT -->
<div class="a" style="left:40px;top:110px;width:870px;height:684px;background:#a8a8a8"></div>
<div class="a" style="left:41px;top:111px;width:868px;height:682px;background:#67b3ff;overflow:hidden">
<div class="a" style="left:0;top:0;width:869px;height:16px;background:#61a9ef"></div>
<div class="a" style="left:0;top:666px;width:869px;height:16px;background:#61a9ef"></div>
<div class="a" style="left:1px;top:2px;width:61px;height:14px;background:#4f8fd8;border-radius:3px"></div>
<div class="t" style="left:4px;top:2px;color:#cfe0f4">Perspectiva</div>
<svg style="left:0;top:0" width="869" height="682" viewBox="41 111 869 682" shape-rendering="crispEdges">
<rect x="41" y="519" width="869" height="21" fill="#3b3937"/>
<g stroke="#3d4650" stroke-width="1.2">
<line x1="41" y1="586.5" x2="910" y2="586.5"/>
<line x1="41" y1="573.0" x2="910" y2="573.0"/>
<line x1="41" y1="564.0" x2="910" y2="564.0"/>
<line x1="41" y1="557.6" x2="910" y2="557.6"/>
<line x1="41" y1="552.8" x2="910" y2="552.8"/>
<line x1="41" y1="549.0" x2="910" y2="549.0"/>
<line x1="41" y1="546.0" x2="910" y2="546.0"/>
<line x1="41" y1="543.5" x2="910" y2="543.5"/>
<line x1="41" y1="541.5" x2="910" y2="541.5"/>
<line x1="41" y1="539.8" x2="910" y2="539.8"/>
<line x1="41" y1="538.3" x2="910" y2="538.3"/>
<line x1="41" y1="537.0" x2="910" y2="537.0"/>
</g>
<g stroke="#5a9ad8" stroke-width="1"><line x1="41" y1="534.5" x2="896" y2="534.5"/><line x1="41" y1="538.5" x2="910" y2="538.5"/></g>
<g stroke="#8a8f98" stroke-width="1" stroke-dasharray="5 4"><line x1="41" y1="508.5" x2="70" y2="508.5"/><line x1="868" y1="508.5" x2="910" y2="508.5"/></g>
<g stroke="#3c444e" stroke-width="1" fill="none">
<line x1="41" y1="697" x2="700" y2="594"/>
<line x1="355" y1="644" x2="531" y2="670"/>
<line x1="41" y1="784" x2="531" y2="672"/>
<line x1="182" y1="675" x2="531" y2="760"/>
<line x1="600" y1="610" x2="825" y2="629"/>
<line x1="722" y1="629" x2="910" y2="586"/>
<line x1="747" y1="589" x2="910" y2="600"/>
<line x1="635" y1="605" x2="910" y2="616"/>
<line x1="41" y1="640" x2="120" y2="652"/>
<line x1="41" y1="600" x2="90" y2="606"/>
<line x1="41" y1="582" x2="70" y2="585"/>
<line x1="41" y1="560" x2="70" y2="562"/>
<line x1="860" y1="575" x2="910" y2="578"/>
<line x1="865" y1="560" x2="910" y2="562"/>

</g>
<g stroke="#fff" stroke-width="1" stroke-linejoin="round">
<polygon fill="#535861" points="70,377.5 156,357 149.5,679.5 62,657"/>
<polygon fill="#535861" points="205,366 220,394 315,379 357,386 354,648 327.5,652 232,635.5 232.5,601 184.5,594.5 187,380"/>
<polygon fill="#3d4146" points="156,357 210,364.5 263,551 315,379 357,385.5 354,648.5 327.5,652 330,418.5 277,599.5 245,602 187.5,411 181,675 149.5,679.5"/>
<g shape-rendering="crispEdges" stroke="#3c444e" stroke-width="1"><line x1="182.600" y1="613" x2="232" y2="605"/><line x1="182.600" y1="615" x2="232" y2="623"/><line x1="182" y1="635" x2="232" y2="629"/></g><polygon fill="#535861" points="357,407 443,397 469,400 474,417.5 544.5,410.5 545.5,619 525,620.5 502.5,625 404.5,614 397.5,641 372.5,644.5 354,648.5"/>
<polygon fill="#3d4146" points="443,397 469,400 525,620.5 502.5,625 489,570.5 414.5,577 397.5,641 372.5,644.5"/>
<polygon fill="#535861" points="453,434.5 482,544.5 422.5,546"/>
<polygon fill="#111" stroke="none" points="424,543 462,543 462,546 423,547"/>
<polygon fill="#535861" stroke="none" points="590,428 690,424 690,600 634,605 600,520"/>
<polygon fill="#535861" points="564,528 582,528 616,607.5 564,602"/>
<path fill="#3d4146" fill-rule="evenodd" d="M544.5,410.5 L575,412 C600,414 620,435 619.5,470 C619,500 608,515 598.5,520 L634,604.5 L615,607.5 L581,530 L564,530 L564,615 L545.5,619 Z M564,436 L564,507.5 L580,507 C597,505 604,490 604,470 C604,450 596,438 580,436.5 Z"/>
</g>
<path fill="#9a9da3" stroke="none" d="M564,436 L564,507.5 L580,507 C597,505 604,490 604,470 C604,450 596,438 580,436.5 Z"/><path fill="#6a6e76" stroke="none" d="M592,442 C600,450 604,460 604,470 C604,490 598,502 588,506 C596,490 597,460 592,442 Z"/>
<g stroke="#fff" stroke-width="1">
<line x1="565" y1="437.0" x2="563.0" y2="437.0"/>
<line x1="565" y1="439.0" x2="576.3" y2="439.0"/>
<line x1="565" y1="441.0" x2="581.6" y2="441.0"/>
<line x1="565" y1="443.0" x2="585.4" y2="443.0"/>
<line x1="565" y1="445.0" x2="588.5" y2="445.0"/>
<line x1="565" y1="447.0" x2="591.0" y2="447.0"/>
<line x1="565" y1="449.0" x2="593.2" y2="449.0"/>
<line x1="565" y1="451.0" x2="595.0" y2="451.0"/>
<line x1="565" y1="453.0" x2="596.6" y2="453.0"/>
<line x1="565" y1="455.0" x2="598.0" y2="455.0"/>
<line x1="565" y1="457.0" x2="599.1" y2="457.0"/>
<line x1="565" y1="459.0" x2="600.1" y2="459.0"/>
<line x1="565" y1="461.0" x2="601.0" y2="461.0"/>
<line x1="565" y1="463.0" x2="601.7" y2="463.0"/>
<line x1="565" y1="465.0" x2="602.2" y2="465.0"/>
<line x1="565" y1="467.0" x2="602.6" y2="467.0"/>
<line x1="565" y1="469.0" x2="602.9" y2="469.0"/>
<line x1="565" y1="471.0" x2="603.0" y2="471.0"/>
<line x1="565" y1="473.0" x2="603.0" y2="473.0"/>
<line x1="565" y1="475.0" x2="602.9" y2="475.0"/>
<line x1="565" y1="477.0" x2="602.6" y2="477.0"/>
<line x1="565" y1="479.0" x2="602.2" y2="479.0"/>
<line x1="565" y1="481.0" x2="601.7" y2="481.0"/>
<line x1="565" y1="483.0" x2="601.0" y2="483.0"/>
<line x1="565" y1="485.0" x2="600.1" y2="485.0"/>
<line x1="565" y1="487.0" x2="599.1" y2="487.0"/>
<line x1="565" y1="489.0" x2="598.0" y2="489.0"/>
<line x1="565" y1="491.0" x2="596.6" y2="491.0"/>
<line x1="565" y1="493.0" x2="595.0" y2="493.0"/>
<line x1="565" y1="495.0" x2="593.2" y2="495.0"/>
<line x1="565" y1="497.0" x2="591.0" y2="497.0"/>
<line x1="565" y1="499.0" x2="588.5" y2="499.0"/>
<line x1="565" y1="501.0" x2="585.4" y2="501.0"/>
<line x1="565" y1="503.0" x2="581.6" y2="503.0"/>
<line x1="565" y1="505.0" x2="576.3" y2="505.0"/>
<line x1="565" y1="507.0" x2="563.0" y2="507.0"/>
</g>
<defs><clipPath id="hc"><polygon points="606.8,428.6 611.3,435.0 614.8,442.4 617.5,450.7 619.1,459.9 619.5,470.0 619.0,478.6 618.0,486.2 616.5,493.1 614.6,499.1 612.4,504.4 609.9,508.9 607.1,512.7 604.3,515.8 601.4,518.2 598.5,520.0 634.0,604.5 690.0,598.0 690.0,424.0 606.0,427.0"/></clipPath></defs><g clip-path="url(#hc)"><g stroke="#fff" stroke-width="1"><line x1="590" y1="432.5" x2="690" y2="438.1"/><line x1="590" y1="438.6" x2="690" y2="443.8"/><line x1="590" y1="444.6" x2="690" y2="449.4"/><line x1="590" y1="450.6" x2="690" y2="455.0"/><line x1="590" y1="456.7" x2="690" y2="460.7"/><line x1="590" y1="462.8" x2="690" y2="466.4"/><line x1="590" y1="468.8" x2="690" y2="472.0"/><line x1="590" y1="474.9" x2="690" y2="477.7"/><line x1="590" y1="480.9" x2="690" y2="483.3"/><line x1="590" y1="486.9" x2="690" y2="488.9"/><line x1="590" y1="493.0" x2="690" y2="494.6"/><line x1="590" y1="499.1" x2="690" y2="500.2"/><line x1="590" y1="505.1" x2="690" y2="505.9"/><line x1="590" y1="511.1" x2="690" y2="511.5"/><line x1="590" y1="517.2" x2="690" y2="517.2"/><line x1="590" y1="523.2" x2="690" y2="522.9"/><line x1="590" y1="529.3" x2="690" y2="528.5"/><line x1="590" y1="535.4" x2="690" y2="534.1"/><line x1="590" y1="541.4" x2="690" y2="539.8"/><line x1="590" y1="547.5" x2="690" y2="545.5"/><line x1="590" y1="553.5" x2="690" y2="551.1"/><line x1="590" y1="559.5" x2="690" y2="556.8"/><line x1="590" y1="565.6" x2="690" y2="562.4"/><line x1="590" y1="571.6" x2="690" y2="568.0"/><line x1="590" y1="577.7" x2="690" y2="573.7"/><line x1="590" y1="583.8" x2="690" y2="579.4"/><line x1="590" y1="589.8" x2="690" y2="585.0"/><line x1="590" y1="595.9" x2="690" y2="590.6"/><line x1="590" y1="601.9" x2="690" y2="596.3"/><line x1="590" y1="608.0" x2="690" y2="602.0"/><line x1="590" y1="614.0" x2="690" y2="607.6"/><line x1="590" y1="620.0" x2="690" y2="613.2"/></g><g stroke="#111" stroke-width="1.6" stroke-dasharray="7 5"><line x1="606" y1="430" x2="690" y2="427"/><line x1="612" y1="433" x2="690" y2="430.500"/></g><polyline fill="none" stroke="#fff" stroke-width="1" points="606.8,428.6 611.3,435.0 614.8,442.4 617.5,450.7 619.1,459.9 619.5,470.0 619.0,478.6 618.0,486.2 616.5,493.1 614.6,499.1 612.4,504.4 609.9,508.9 607.1,512.7 604.3,515.8 601.4,518.2 598.5,520.0 634.0,604.5"/></g>
<g stroke="#fff" stroke-width="1" stroke-linejoin="round">
<polygon fill="#535861" stroke="none" points="660,440 728,436 730,589 690,592 660,560"/>
<path fill="#3d4146" d="M710,437.5 C700,428 690,425 682.5,425 C660,426 645,465 645,507.5 C645,550 662,597 687.5,597.5 C697,597.5 707,594 713.75,590 L712.5,567 C705,574 697,578.75 690,578.75 C672,578 658.75,545 658.75,507.5 C658.75,470 670,445 685,445 C694,445 704,451 711,459 Z"/>
</g>
<g stroke="#fff" stroke-width="1">
<line x1="690.0" y1="446.0" x2="710.0" y2="447.0"/>
<line x1="696.0" y1="574.0" x2="712.0" y2="568.0"/>
<line x1="689.5" y1="448.4" x2="710.0" y2="449.4"/>
<line x1="694.5" y1="576.2" x2="712.0" y2="570.2"/>
<line x1="689.0" y1="450.8" x2="710.0" y2="451.8"/>
<line x1="693.0" y1="578.4" x2="712.0" y2="572.4"/>
<line x1="688.5" y1="453.2" x2="710.0" y2="454.2"/>
<line x1="691.5" y1="580.6" x2="712.0" y2="574.6"/>
<line x1="688.0" y1="455.6" x2="710.0" y2="456.6"/>
<line x1="690.0" y1="582.8" x2="712.0" y2="576.8"/>
<line x1="687.5" y1="458.0" x2="710.0" y2="459.0"/>
<line x1="688.5" y1="585.0" x2="712.0" y2="579.0"/>
</g>
<g stroke="#fff" stroke-width="1" stroke-linejoin="round">
<polygon fill="#535861" points="711,437.5 727.5,436 730,589 713.75,590"/>
<polygon fill="#535861" points="771,441 788.75,443.75 790,580 776,582.5"/>
<polygon fill="#535861" stroke="none" points="738.75,454.5 771,458 776,567 741,572.5"/>
<polygon fill="#3d4146" points="727.5,436 771,441 771,458 738.75,454.5 739,500 767,500 767,517.5 739.5,517.5 741,572.5 776,567 776,582.5 730,589"/>
<polygon fill="#111" stroke="none" points="740,455 760,457 760,460 740,460"/>
<polygon fill="#111" stroke="none" points="742,565 765,562 765,566 742,571"/>
<polygon fill="#535861" stroke="none" points="796,449 850,449 850,573 825,575 825,560 799,561"/>
<polygon fill="#3d4146" points="788.75,443.75 795.5,444.5 798.75,561 825,560 825,575 790,580"/>
<polygon fill="#111" stroke="none" points="800,553 820,551 820,554 800,558"/>
</g>
<g stroke="#fff" stroke-width="1">
<line x1="797" y1="455.0" x2="836.0" y2="452.0"/>
<line x1="797" y1="460.7" x2="836.0" y2="458.0"/>
<line x1="797" y1="466.4" x2="836.0" y2="464.0"/>
<line x1="797" y1="472.1" x2="836.0" y2="470.0"/>
<line x1="797" y1="477.8" x2="836.0" y2="476.0"/>
<line x1="797" y1="483.5" x2="836.0" y2="482.0"/>
<line x1="797" y1="489.2" x2="836.0" y2="488.0"/>
<line x1="797" y1="494.9" x2="836.0" y2="494.0"/>
<line x1="797" y1="500.6" x2="836.0" y2="500.0"/>
<line x1="797" y1="506.3" x2="836.0" y2="506.0"/>
<line x1="797" y1="512.0" x2="836.0" y2="512.0"/>
<line x1="797" y1="517.7" x2="836.0" y2="518.0"/>
<line x1="797" y1="523.4" x2="836.0" y2="524.0"/>
<line x1="797" y1="529.1" x2="836.0" y2="530.0"/>
<line x1="797" y1="534.8" x2="836.0" y2="536.0"/>
<line x1="797" y1="540.5" x2="836.0" y2="542.0"/>
<line x1="797" y1="546.2" x2="836.0" y2="548.0"/>
<line x1="797" y1="551.9" x2="836.0" y2="554.0"/>
<line x1="797" y1="557.6" x2="836.0" y2="560.0"/>
<line x1="797" y1="563.3" x2="836.0" y2="566.0"/>
</g>
<g stroke="#fff" stroke-width="1">
<path fill="#3d4146" fill-rule="evenodd" d="M850,449 a17.5,62 0 1,0 0.01,0 Z M850,462.5 a11.2,49 0 1,1 -0.01,0 Z"/>
<ellipse cx="850" cy="511.5" rx="11.2" ry="49" fill="#f4f4f4"/>
</g>
<g stroke="#535861" stroke-width="1">
<line x1="840" y1="470.0" x2="860" y2="470.0"/>
<line x1="840" y1="477.5" x2="860" y2="477.5"/>
<line x1="840" y1="485.0" x2="860" y2="485.0"/>
<line x1="840" y1="492.5" x2="860" y2="492.5"/>
<line x1="840" y1="500.0" x2="860" y2="500.0"/>
<line x1="840" y1="507.5" x2="860" y2="507.5"/>
<line x1="840" y1="515.0" x2="860" y2="515.0"/>
<line x1="840" y1="522.5" x2="860" y2="522.5"/>
<line x1="840" y1="530.0" x2="860" y2="530.0"/>
<line x1="840" y1="537.5" x2="860" y2="537.5"/>
<line x1="840" y1="545.0" x2="860" y2="545.0"/>
<line x1="840" y1="552.5" x2="860" y2="552.5"/>
</g>
<g stroke="#fca61c" stroke-width="1" fill="none">
<polyline points="63,425 63,367.5 80,363"/>
<polyline points="63,367.5 347.5,400.5"/>
<polyline points="155.5,411 155.5,344 135,348"/>
<polyline points="155.5,344 449,387.5"/>
<polyline points="56,607.5 56,668 70,672.5"/>
<polyline points="56,668 346,629"/>
<polyline points="148,624 148,695 126,689.5"/>
<polyline points="148,695 449,644.5"/>
<polyline points="727.5,445 792.5,452.5 794,475"/>
<polyline points="792,452 869,449"/>
<polyline points="810,441 869,449 869,474"/>
<polyline points="731,579 795,570 795,546"/>
<polyline points="795,570 810,570.5"/>
<polyline points="815,583 871,573 871,549"/>

</g>
<g fill="none" stroke-width="1">
<polyline stroke="#18a030" points="675,158 676,230 677,300 678,400 679,596"/>
<polyline stroke="#18a030" points="671,166 675,158 681,174"/>
<polyline stroke="#18a030" points="672,112 674.5,118 677,112"/><line stroke="#18a030" x1="674.5" y1="120" x2="674.5" y2="133"/>
<polygon fill="#22cc33" stroke="#18a030" points="679,448 673.5,470 684.5,470"/>
<rect x="675.5" y="593.5" width="11" height="9" stroke="#fff"/>
<polyline stroke="#d03030" points="687,597 710,593 738,588"/><circle cx="738" cy="588" r="5" fill="#e02222" stroke="none"/><polygon fill="#a01818" stroke="none" points="741,584 746,588 741,592"/>
<polyline stroke="#2222c8" points="575,590.5 620,592 675,597"/><polygon fill="#2222c8" stroke="none" points="563,590 576,585 578,595"/>
<polyline stroke="#c82828" stroke-dasharray="6 2" points="826,573.5 840,572 860,570"/>
<line stroke="#22cc33" x1="74.5" y1="742" x2="74.5" y2="759"/><polyline stroke="#22cc33" points="71,730.5 74.5,734.5 78,730.5"/><line stroke="#22cc33" x1="74.5" y1="734.5" x2="74.5" y2="739"/>
<polyline stroke="#2828e0" points="61,760.5 66,759.5 74.5,759"/><polyline stroke="#2828e0" points="50,756.5 57,756.5 50,764.5 57,764.5"/>
<polyline stroke="#e03030" points="74.5,759 82,759.5 86,760.5"/><path stroke="#e03030" d="M90,756.5 L97,764.5 M97,756.5 L90,764.5"/>
</g>
</svg></div>
<!-- OBJECTS PANEL -->
<div class="a" style="left:911px;top:91px;width:3px;height:903px;background:#3e3e3e;"></div>
<div class="a" style="left:911px;top:517px;width:369px;height:4px;background:#3e3e3e;"></div>
<div class="a" style="left:915px;top:51px;width:46px;height:21px;background:linear-gradient(#787878,#646464);border-radius:5px 5px 0 0;box-shadow:0 0 0 1px #555"></div>
<div class="t" style="left:920px;top:53.8px;font-size:13px;line-height:15px;color:#f0a020;transform:scaleX(0.826);">Objetos</div>
<div class="a" style="left:962px;top:53px;width:60px;height:18px;background:#333;border-radius:3px 3px 0 0"></div>
<div class="t" style="left:968px;top:53.8px;font-size:13px;line-height:15px;color:#8a8a8a;transform:scaleX(0.827);">Estructura</div>
<div class="a" style="left:914px;top:71px;width:366px;height:1px;background:#8a8a8a;"></div>
<div class="a" style="left:914px;top:72px;width:366px;height:21px;background:#484848;"></div>
<div class="a" style="left:914px;top:93px;width:366px;height:1px;background:#3a3a3a;"></div>
<div class="a" style="left:921px;top:77px;width:12px;height:11px;background:repeating-linear-gradient(135deg,#9a9a9a 0,#9a9a9a 1px,#3e3e3e 1px,#3e3e3e 2.200px)"></div>
<div class="t" style="left:940px;top:74.3px;font-size:13px;line-height:15px;color:#d2d2d2;transform:scaleX(0.853);">Archivo</div>
<div class="t" style="left:991px;top:74.3px;font-size:13px;line-height:15px;color:#d2d2d2;transform:scaleX(0.824);">Editar</div>
<div class="t" style="left:1031.5px;top:74.3px;font-size:13px;line-height:15px;color:#d2d2d2;transform:scaleX(0.834);">Visor</div>
<div class="t" style="left:1069.5px;top:74.3px;font-size:13px;line-height:15px;color:#d2d2d2;transform:scaleX(0.792);">Objetos</div>
<div class="t" style="left:1119.5px;top:74.3px;font-size:13px;line-height:15px;color:#d2d2d2;transform:scaleX(0.812);">Etiquetas</div>
<svg style="left:1188px;top:73px" width="92" height="20" viewBox="1188 73 92 20"><path d="M1191.500,78 l5,3.700 l-5,3.700 Z" fill="#d0d0d0"/><g fill="none" stroke="#242424"><circle cx="1212" cy="81" r="3.800" stroke-width="1.600"/><path d="M1215,84 l5.500,5.500" stroke-width="2.400"/><path d="M1224.500,82 l7.500,-6.500 l7.500,6.500 M1226.500,81.500 v7.500 h11 v-7.500" stroke-width="1.600"/><path d="M1244,83.500 q7.500,-6 15,0 q-7.500,5 -15,0 Z" stroke="#2e2e2e" stroke-width="1.200"/><rect x="1263.500" y="76.500" width="12" height="13" stroke-width="1.200"/><path d="M1263,76 h13" stroke-width="2.200"/><path d="M1269.500,80 v7 M1266,83.500 h7" stroke-width="2"/></g></svg>
<div class="a" style="left:914px;top:94px;width:366px;height:422px;background:#6a6a6a;"></div>
<div class="a" style="left:915px;top:94px;width:365px;height:421px;background:#3a3a3a;"></div>
<div class="a" style="left:916px;top:95px;width:127px;height:420px;background:#4d4d4d;"></div>
<div class="a" style="left:1044px;top:95px;width:38px;height:420px;background:#4d4d4d;"></div>
<div class="a" style="left:1083px;top:95px;width:194px;height:420px;background:#4d4d4d;"></div>
<div class="a" style="left:916px;top:96px;width:127px;height:20px;background:#585858;"></div>
<div class="a" style="left:1044px;top:96px;width:38px;height:20px;background:#585858;"></div>
<div class="a" style="left:1083px;top:96px;width:194px;height:20px;background:#585858;"></div>
<div class="a" style="left:916px;top:116px;width:127px;height:20px;background:#535353;"></div>
<div class="a" style="left:1044px;top:116px;width:38px;height:20px;background:#535353;"></div>
<div class="a" style="left:1083px;top:116px;width:194px;height:20px;background:#535353;"></div>
<svg style="left:916px;top:95px" width="364" height="42" viewBox="916 95 364 42"><g fill="none" stroke="#b8b8b8" stroke-width="1"><path d="M923.500,96 v6 M928,106.500 h3.500 M933.500,116 v11.500 h8.500"/><rect x="919.500" y="102.500" width="8" height="8"/><path d="M921.500,106.500 h4"/></g><path d="M935,103.500 L940,100.800 L945.800,102.300 L945.300,110.300 L940.800,113 L935,111.200 Z" fill="#48d898" stroke="#e8fff4" stroke-width="1" stroke-linejoin="round"/><path d="M935,103.500 L940,100.800 L945.800,102.300 L940.800,105 Z" fill="#a0f4d0"/><path d="M935,103.500 L940.800,105 L940.800,113 M940.800,105 L945.800,102.300" fill="none" stroke="#e8fff4" stroke-width=".800"/><rect x="936.300" y="106" width="3.200" height="3.600" fill="#1a4a34"/><path d="M945.500,131.500 L949.800,121 L951.200,121 L955.500,131.500 M947.200,128 h6.600" fill="none" stroke="#62c8f4" stroke-width="1.700"/><g fill="#8a8a8a"><circle cx="1053" cy="105.800" r="4"/><circle cx="1053" cy="125.800" r="4"/></g><g fill="#777"><circle cx="1066.500" cy="102.300" r="2.400"/><circle cx="1066.500" cy="110" r="2.400"/><circle cx="1066.500" cy="122.300" r="2.400"/><circle cx="1066.500" cy="130" r="2.400"/></g><g fill="none" stroke="#50e8a0" stroke-width="1.800"><path d="M1072.500,106.500 l2.500,2.800 l6,-7"/><path d="M1072.500,126.500 l2.500,2.800 l6,-7"/></g><defs><radialGradient id="gp" cx=".35" cy=".3" r=".8"><stop offset="0" stop-color="#f0b070"/><stop offset="1" stop-color="#9a5a18"/></radialGradient></defs><circle cx="1089" cy="102" r="3.500" fill="url(#gp)"/><circle cx="1096" cy="109" r="3.500" fill="url(#gp)"/></svg>
<div class="t" style="left:951px;top:98.3px;font-size:13px;line-height:15px;color:#c07a14;transform:scaleX(0.823);">NURBS Extrusión</div>
<div class="t" style="left:962px;top:118.3px;font-size:13px;line-height:15px;color:#f0a020;transform:scaleX(0.885);">Texto</div>
<!-- ATTR PANEL -->
<div class="a" style="left:914px;top:520px;width:366px;height:1px;background:#8a8a8a;"></div>
<div class="a" style="left:914px;top:521px;width:1px;height:473px;background:#686868;"></div>
<div class="a" style="left:914px;top:521px;width:366px;height:16px;background:#2e2e2e;"></div>
<div class="a" style="left:918px;top:524px;width:10px;height:10px;background:linear-gradient(135deg,#9a9a9a,#6a6a6a);border:1px solid #555"></div>
<div class="t" style="left:938.5px;top:521.3px;font-size:13px;line-height:15px;color:#d2d2d2;transform:scaleX(0.819);">Atributos</div>
<div class="a" style="left:914px;top:537px;width:366px;height:20px;background:#484848;"></div>
<div class="a" style="left:914px;top:557px;width:366px;height:1px;background:#6a6a6a;"></div>
<div class="a" style="left:921px;top:542px;width:12px;height:11px;background:repeating-linear-gradient(135deg,#9a9a9a 0,#9a9a9a 1px,#3e3e3e 1px,#3e3e3e 2.200px)"></div>
<div class="t" style="left:941px;top:539.8px;font-size:13px;line-height:15px;color:#d2d2d2;transform:scaleX(0.830);">Modo</div>
<div class="t" style="left:982px;top:539.8px;font-size:13px;line-height:15px;color:#d2d2d2;transform:scaleX(0.810);">Editar</div>
<div class="t" style="left:1023px;top:539.8px;font-size:13px;line-height:15px;color:#d2d2d2;transform:scaleX(0.821);">Datos de Usuario</div>
<svg style="left:1130px;top:538px" width="150" height="20" viewBox="1130 538 150 20"><path d="M1147,541 v12 l-13,-6 Z" fill="#2a2a2a"/><path d="M1153,541 l15,6.500 l-14,6 Z" fill="#555" stroke="#5e5e5e" stroke-width=".8"/><path d="M1184.500,541 l6.500,13 h-13 Z" fill="#2a2a2a"/><g fill="none" stroke="#242424"><circle cx="1209" cy="546" r="4" stroke-width="1.600"/><path d="M1212,549.500 l5.500,5.500" stroke-width="2.400"/><path d="M1229,548 v-3.500 a3.500,3.500 0 0,1 7,-1" stroke-width="1.300"/><rect x="1227.500" y="547.500" width="10" height="7" fill="#333" stroke-width="1.200"/><circle cx="1251.500" cy="544" r="3" stroke-width="1.200"/><circle cx="1251.500" cy="551.500" r="3" stroke-width="1.200"/><rect x="1263.500" y="541.500" width="12" height="13" stroke-width="1.200"/><path d="M1263,541 h13" stroke-width="2.200"/><path d="M1269.500,545 v7 M1266,548.500 h7" stroke-width="2"/></g></svg>
<svg style="left:920px;top:564px" width="16" height="16" viewBox="0 0 16 16"><path d="M2,14.500 L7.200,1.500 L8.800,1.500 L14,14.500 M4,10 h8" fill="none" stroke="#62c8f4" stroke-width="2"/></svg>
<div class="t" style="left:943.5px;top:563.8px;font-size:13px;line-height:15px;color:#d2d2d2;transform:scaleX(0.845);">Objeto Texto  [Texto]</div>
<div class="a" style="left:918px;top:586px;width:119px;height:16px;border-radius:3px;background:#6e6e6e;overflow:hidden"><div class="a" style="left:39px;top:0;width:1px;height:16px;background:#555"></div><div class="a" style="left:80px;top:0;width:39px;height:16px;background:#8eabd1"></div></div>
<div class="t" style="left:921.5px;top:585.8px;font-size:13px;line-height:15px;color:#d8d8d8;transform:scaleX(0.807);">Básico</div>
<div class="t" style="left:961.5px;top:585.8px;font-size:13px;line-height:15px;color:#d8d8d8;transform:scaleX(0.781);">Coord.</div>
<div class="t" style="left:1001.5px;top:585.8px;font-size:13px;line-height:15px;color:#101010;transform:scaleX(0.796);">Objeto</div>
<div class="a" style="left:917px;top:608px;width:358px;height:15px;background:#333;"></div>
<div class="t" style="left:919.5px;top:607.3px;font-size:13px;line-height:15px;color:#d0d0d0;font-weight:bold;transform:scaleX(0.906);">Propiedades del Objeto</div>
<div class="a" style="left:959px;top:627px;width:314px;height:65px;background:#333;border:1px solid #2a2a2a;border-right-color:#5a5a5a;border-bottom-color:#5a5a5a"></div>
<div class="t" style="left:961px;top:627.8px;font-size:13px;line-height:15px;color:#c8c8c8;transform:scaleX(0.817);">MARCELO</div>
<div class="a" style="left:968px;top:696px;width:306px;height:1px;background:#5c5c5c;"></div>
<div class="a" style="left:968px;top:853px;width:306px;height:1px;background:#5c5c5c;"></div>
<div class="a" style="left:970px;top:713.5px;width:60px;height:1px;background:repeating-linear-gradient(90deg,#9a9a9a 0,#9a9a9a 2px,transparent 2px,transparent 5.600px)"></div>
<div class="a" style="left:1036px;top:700.5px;width:113px;height:16.5px;border-radius:4px;background:linear-gradient(#7e7e7e,#6c6c6c 60%,#646464);box-shadow:0 0 0 1px #3e3e3e"></div><div class="t" style="left:1043px;top:700.85px;font-size:13px;line-height:15px;color:#dcdcdc;transform:scaleX(0.834);">Fuente True Tipo</div><svg style="left:1135px;top:706.25px" width="10" height="6" viewBox="0 0 10 6"><path d="M0.500,0.500 h9 l-4.500,4.500 Z" fill="#e0e0e0"/></svg>
<div class="a" style="left:1154px;top:700.500px;width:64px;height:16.500px;border-radius:8px;background:linear-gradient(#787878,#686868);box-shadow:0 0 0 1px #3a3a3a"></div>
<div class="t" style="left:1165px;top:701.3px;font-size:13px;line-height:15px;color:#dcdcdc;transform:scaleX(0.819);">Fuente...</div>
<div class="a" style="left:970px;top:732.5px;width:60px;height:1px;background:repeating-linear-gradient(90deg,#9a9a9a 0,#9a9a9a 2px,transparent 2px,transparent 5.600px)"></div>
<div class="a" style="left:1036px;top:720px;width:237px;height:16.5px;border-radius:4px;background:linear-gradient(#7e7e7e,#6c6c6c 60%,#646464);box-shadow:0 0 0 1px #3e3e3e"></div><div class="t" style="left:1043px;top:720.35px;font-size:13px;line-height:15px;color:#dcdcdc;transform:scaleX(0.794);">Centro</div><svg style="left:1259px;top:725.75px" width="10" height="6" viewBox="0 0 10 6"><path d="M0.500,0.500 h9 l-4.500,4.500 Z" fill="#e0e0e0"/></svg>
<div class="a" style="left:970px;top:751.5px;width:60px;height:1px;background:repeating-linear-gradient(90deg,#9a9a9a 0,#9a9a9a 2px,transparent 2px,transparent 5.600px)"></div>
<div class="a" style="left:1036px;top:739px;width:66px;height:15.500px;background:#2c2c2c;box-shadow:0 0 0 1px #5e5e5e"></div><div class="t" style="left:1041px;top:738.3px;font-size:13px;line-height:15px;color:#e0e0e0;transform:scaleX(0.821);">200 cm</div><svg style="left:1094px;top:741px" width="6" height="12" viewBox="0 0 6 12"><path d="M0,5 l3,-4.500 l3,4.500 Z M0,7 l3,4.500 l3,-4.500 Z" fill="#a8a8a8"/></svg>
<div class="t" style="left:968px;top:757.8px;font-size:13px;line-height:15px;color:#d2d2d2;transform:scaleX(0.790);">do Horizontal</div>
<div class="a" style="left:1036px;top:758px;width:66px;height:15.500px;background:#2c2c2c;box-shadow:0 0 0 1px #5e5e5e"></div><div class="t" style="left:1041px;top:757.3px;font-size:13px;line-height:15px;color:#e0e0e0;transform:scaleX(0.816);">0 cm</div><svg style="left:1094px;top:760px" width="6" height="12" viewBox="0 0 6 12"><path d="M0,5 l3,-4.500 l3,4.500 Z M0,7 l3,4.500 l3,-4.500 Z" fill="#a8a8a8"/></svg>
<div class="t" style="left:968px;top:776.8px;font-size:13px;line-height:15px;color:#d2d2d2;transform:scaleX(0.799);">do Vertical</div>
<div class="a" style="left:1024px;top:789.5px;width:6px;height:1px;background:repeating-linear-gradient(90deg,#9a9a9a 0,#9a9a9a 2px,transparent 2px,transparent 5.600px)"></div>
<div class="a" style="left:1036px;top:777px;width:66px;height:15.500px;background:#2c2c2c;box-shadow:0 0 0 1px #5e5e5e"></div><div class="t" style="left:1041px;top:776.3px;font-size:13px;line-height:15px;color:#e0e0e0;transform:scaleX(0.816);">0 cm</div><svg style="left:1094px;top:779px" width="6" height="12" viewBox="0 0 6 12"><path d="M0,5 l3,-4.500 l3,4.500 Z M0,7 l3,4.500 l3,-4.500 Z" fill="#a8a8a8"/></svg>
<div class="t" style="left:968.5px;top:795.3px;font-size:13px;line-height:15px;color:#d2d2d2;transform:scaleX(0.802);">Letras</div>
<div class="a" style="left:1001px;top:808px;width:29px;height:1px;background:repeating-linear-gradient(90deg,#9a9a9a 0,#9a9a9a 2px,transparent 2px,transparent 5.600px)"></div>
<div class="a" style="left:1036px;top:798px;width:11px;height:11px;border-radius:3px;background:#787878;box-shadow:0 0 0 1px #444"></div>
<div class="a" style="left:970px;top:827px;width:60px;height:1px;background:repeating-linear-gradient(90deg,#9a9a9a 0,#9a9a9a 2px,transparent 2px,transparent 5.600px)"></div>
<div class="a" style="left:1036px;top:814px;width:237px;height:16.5px;border-radius:4px;background:linear-gradient(#7e7e7e,#6c6c6c 60%,#646464);box-shadow:0 0 0 1px #3e3e3e"></div><div class="t" style="left:1043px;top:814.35px;font-size:13px;line-height:15px;color:#dcdcdc;transform:scaleX(0.807);">XY</div><svg style="left:1259px;top:819.75px" width="10" height="6" viewBox="0 0 10 6"><path d="M0.500,0.500 h9 l-4.500,4.500 Z" fill="#e0e0e0"/></svg>
<div class="a" style="left:970px;top:845px;width:60px;height:1px;background:repeating-linear-gradient(90deg,#9a9a9a 0,#9a9a9a 2px,transparent 2px,transparent 5.600px)"></div>
<div class="a" style="left:1036px;top:835px;width:11px;height:11px;border-radius:3px;background:#787878;box-shadow:0 0 0 1px #444"></div>
<div class="t" style="left:968px;top:858.3px;font-size:13px;line-height:15px;color:#d2d2d2;transform:scaleX(0.765);">ntermedios.</div>
<div class="a" style="left:1024px;top:870.5px;width:6px;height:1px;background:repeating-linear-gradient(90deg,#9a9a9a 0,#9a9a9a 2px,transparent 2px,transparent 5.600px)"></div>
<div class="a" style="left:1036px;top:858px;width:237px;height:16.5px;border-radius:4px;background:linear-gradient(#7e7e7e,#6c6c6c 60%,#646464);box-shadow:0 0 0 1px #3e3e3e"></div><div class="t" style="left:1043px;top:858.35px;font-size:13px;line-height:15px;color:#dcdcdc;transform:scaleX(0.846);">Adaptativo</div><svg style="left:1259px;top:863.75px" width="10" height="6" viewBox="0 0 10 6"><path d="M0.500,0.500 h9 l-4.500,4.500 Z" fill="#e0e0e0"/></svg>
<div class="a" style="left:970px;top:889.5px;width:60px;height:1px;background:repeating-linear-gradient(90deg,#9a9a9a 0,#9a9a9a 2px,transparent 2px,transparent 5.600px)"></div>
<div class="a" style="left:1036px;top:877.5px;width:66px;height:15.500px;background:#4c4c4c;box-shadow:0 0 0 1px #585858"></div><div class="t" style="left:1041px;top:876.8px;font-size:13px;line-height:15px;color:#7c7c7c;transform:scaleX(0.829);">8</div><svg style="left:1094px;top:879.5px" width="6" height="12" viewBox="0 0 6 12"><path d="M0,5 l3,-4.500 l3,4.500 Z M0,7 l3,4.500 l3,-4.500 Z" fill="#6c6c6c"/></svg>
<div class="a" style="left:970px;top:908.5px;width:60px;height:1px;background:repeating-linear-gradient(90deg,#9a9a9a 0,#9a9a9a 2px,transparent 2px,transparent 5.600px)"></div>
<div class="a" style="left:1036px;top:896.5px;width:66px;height:15.500px;background:#2c2c2c;box-shadow:0 0 0 1px #5e5e5e"></div><div class="t" style="left:1041px;top:895.8px;font-size:13px;line-height:15px;color:#e0e0e0;transform:scaleX(0.810);">5 °</div><svg style="left:1094px;top:898.5px" width="6" height="12" viewBox="0 0 6 12"><path d="M0,5 l3,-4.500 l3,4.500 Z M0,7 l3,4.500 l3,-4.500 Z" fill="#a8a8a8"/></svg>
<div class="t" style="left:968px;top:915.3px;font-size:13px;line-height:15px;color:#a8a8a8;transform:scaleX(0.779);">l Máxima</div>
<div class="a" style="left:1013px;top:927.5px;width:17px;height:1px;background:repeating-linear-gradient(90deg,#9a9a9a 0,#9a9a9a 2px,transparent 2px,transparent 5.600px)"></div>
<div class="a" style="left:1036px;top:915.5px;width:66px;height:15.500px;background:#4c4c4c;box-shadow:0 0 0 1px #585858"></div><div class="t" style="left:1041px;top:914.8px;font-size:13px;line-height:15px;color:#7c7c7c;transform:scaleX(0.816);">5 cm</div><svg style="left:1094px;top:917.5px" width="6" height="12" viewBox="0 0 6 12"><path d="M0,5 l3,-4.500 l3,4.500 Z M0,7 l3,4.500 l3,-4.500 Z" fill="#6c6c6c"/></svg>
<!-- TIMELINE -->
<div class="a" style="left:41px;top:802px;width:5px;height:16px;background:repeating-linear-gradient(135deg,#8a8a8a 0,#8a8a8a 1px,#3a3a3a 1px,#3a3a3a 2.500px)"></div>
<div class="a" style="left:41px;top:829px;width:5px;height:13px;background:repeating-linear-gradient(135deg,#8a8a8a 0,#8a8a8a 1px,#3a3a3a 1px,#3a3a3a 2.500px)"></div>
<div class="a" style="left:48px;top:798.5px;width:864px;height:22.5px;background:#333;box-shadow:0 0 0 1px #414141"></div>
<div class="a" style="left:50px;top:799px;width:9.5px;height:14.5px;background:#50e090;"></div>
<svg style="left:48px;top:798px" width="864" height="24" viewBox="48 798 864 24"><g stroke="#c4c4c4" stroke-width="1"><line x1="54.5" y1="812" x2="54.5" y2="821"/><line x1="63.5" y1="816" x2="63.5" y2="821"/><line x1="71.5" y1="816" x2="71.5" y2="821"/><line x1="80.5" y1="816" x2="80.5" y2="821"/><line x1="88.5" y1="816" x2="88.5" y2="821"/><line x1="97.5" y1="812" x2="97.5" y2="821"/><line x1="106.5" y1="816" x2="106.5" y2="821"/><line x1="114.5" y1="816" x2="114.5" y2="821"/><line x1="123.5" y1="816" x2="123.5" y2="821"/><line x1="132.5" y1="816" x2="132.5" y2="821"/><line x1="140.5" y1="812" x2="140.5" y2="821"/><line x1="149.5" y1="816" x2="149.5" y2="821"/><line x1="157.5" y1="816" x2="157.5" y2="821"/><line x1="166.5" y1="816" x2="166.5" y2="821"/><line x1="175.5" y1="816" x2="175.5" y2="821"/><line x1="183.5" y1="812" x2="183.5" y2="821"/><line x1="192.5" y1="816" x2="192.5" y2="821"/><line x1="201.5" y1="816" x2="201.5" y2="821"/><line x1="209.5" y1="816" x2="209.5" y2="821"/><line x1="218.5" y1="816" x2="218.5" y2="821"/><line x1="227.5" y1="812" x2="227.5" y2="821"/><line x1="235.5" y1="816" x2="235.5" y2="821"/><line x1="244.5" y1="816" x2="244.5" y2="821"/><line x1="252.5" y1="816" x2="252.5" y2="821"/><line x1="261.5" y1="816" x2="261.5" y2="821"/><line x1="270.5" y1="812" x2="270.5" y2="821"/><line x1="278.5" y1="816" x2="278.5" y2="821"/><line x1="287.5" y1="816" x2="287.5" y2="821"/><line x1="296.5" y1="816" x2="296.5" y2="821"/><line x1="304.5" y1="816" x2="304.5" y2="821"/><line x1="313.5" y1="812" x2="313.5" y2="821"/><line x1="321.5" y1="816" x2="321.5" y2="821"/><line x1="330.5" y1="816" x2="330.5" y2="821"/><line x1="339.5" y1="816" x2="339.5" y2="821"/><line x1="347.5" y1="816" x2="347.5" y2="821"/><line x1="356.5" y1="812" x2="356.5" y2="821"/><line x1="365.5" y1="816" x2="365.5" y2="821"/><line x1="373.5" y1="816" x2="373.5" y2="821"/><line x1="382.5" y1="816" x2="382.5" y2="821"/><line x1="390.5" y1="816" x2="390.5" y2="821"/><line x1="399.5" y1="812" x2="399.5" y2="821"/><line x1="408.5" y1="816" x2="408.5" y2="821"/><line x1="416.5" y1="816" x2="416.5" y2="821"/><line x1="425.5" y1="816" x2="425.5" y2="821"/><line x1="434.5" y1="816" x2="434.5" y2="821"/><line x1="442.5" y1="812" x2="442.5" y2="821"/><line x1="451.5" y1="816" x2="451.5" y2="821"/><line x1="460.5" y1="816" x2="460.5" y2="821"/><line x1="468.5" y1="816" x2="468.5" y2="821"/><line x1="477.5" y1="816" x2="477.5" y2="821"/><line x1="485.5" y1="812" x2="485.5" y2="821"/><line x1="494.5" y1="816" x2="494.5" y2="821"/><line x1="503.5" y1="816" x2="503.5" y2="821"/><line x1="511.5" y1="816" x2="511.5" y2="821"/><line x1="520.5" y1="816" x2="520.5" y2="821"/><line x1="529.5" y1="812" x2="529.5" y2="821"/><line x1="537.5" y1="816" x2="537.5" y2="821"/><line x1="546.5" y1="816" x2="546.5" y2="821"/><line x1="554.5" y1="816" x2="554.5" y2="821"/><line x1="563.5" y1="816" x2="563.5" y2="821"/><line x1="572.5" y1="812" x2="572.5" y2="821"/><line x1="580.5" y1="816" x2="580.5" y2="821"/><line x1="589.5" y1="816" x2="589.5" y2="821"/><line x1="598.5" y1="816" x2="598.5" y2="821"/><line x1="606.5" y1="816" x2="606.5" y2="821"/><line x1="615.5" y1="812" x2="615.5" y2="821"/><line x1="623.5" y1="816" x2="623.5" y2="821"/><line x1="632.5" y1="816" x2="632.5" y2="821"/><line x1="641.5" y1="816" x2="641.5" y2="821"/><line x1="649.5" y1="816" x2="649.5" y2="821"/><line x1="658.5" y1="812" x2="658.5" y2="821"/><line x1="667.5" y1="816" x2="667.5" y2="821"/><line x1="675.5" y1="816" x2="675.5" y2="821"/><line x1="684.5" y1="816" x2="684.5" y2="821"/><line x1="693.5" y1="816" x2="693.5" y2="821"/><line x1="701.5" y1="812" x2="701.5" y2="821"/><line x1="710.5" y1="816" x2="710.5" y2="821"/><line x1="718.5" y1="816" x2="718.5" y2="821"/><line x1="727.5" y1="816" x2="727.5" y2="821"/><line x1="736.5" y1="816" x2="736.5" y2="821"/><line x1="744.5" y1="812" x2="744.5" y2="821"/><line x1="753.5" y1="816" x2="753.5" y2="821"/><line x1="762.5" y1="816" x2="762.5" y2="821"/><line x1="770.5" y1="816" x2="770.5" y2="821"/><line x1="779.5" y1="816" x2="779.5" y2="821"/><line x1="787.5" y1="812" x2="787.5" y2="821"/><line x1="796.5" y1="816" x2="796.5" y2="821"/><line x1="805.5" y1="816" x2="805.5" y2="821"/><line x1="813.5" y1="816" x2="813.5" y2="821"/><line x1="822.5" y1="816" x2="822.5" y2="821"/><line x1="831.5" y1="812" x2="831.5" y2="821"/><line x1="839.5" y1="816" x2="839.5" y2="821"/><line x1="848.5" y1="816" x2="848.5" y2="821"/><line x1="856.5" y1="816" x2="856.5" y2="821"/><line x1="865.5" y1="816" x2="865.5" y2="821"/><line x1="874.5" y1="812" x2="874.5" y2="821"/><line x1="882.5" y1="816" x2="882.5" y2="821"/><line x1="891.5" y1="816" x2="891.5" y2="821"/><line x1="900.5" y1="816" x2="900.5" y2="821"/><line x1="908.5" y1="816" x2="908.5" y2="821"/></g></svg>
<div class="t" style="left:61px;top:798px;font-size:12px;line-height:14px;color:#50e090;transform:scaleX(0.824);">0</div>
<div class="t" style="left:94.8px;top:798px;font-size:12px;line-height:14px;color:#d0d0d0;transform:scaleX(0.824);">5</div>
<div class="t" style="left:134.95px;top:798px;font-size:12px;line-height:14px;color:#d0d0d0;transform:scaleX(0.862);">10</div>
<div class="t" style="left:178.1px;top:798px;font-size:12px;line-height:14px;color:#d0d0d0;transform:scaleX(0.862);">15</div>
<div class="t" style="left:221.25px;top:798px;font-size:12px;line-height:14px;color:#d0d0d0;transform:scaleX(0.862);">20</div>
<div class="t" style="left:264.4px;top:798px;font-size:12px;line-height:14px;color:#d0d0d0;transform:scaleX(0.862);">25</div>
<div class="t" style="left:307.55px;top:798px;font-size:12px;line-height:14px;color:#d0d0d0;transform:scaleX(0.862);">30</div>
<div class="t" style="left:350.7px;top:798px;font-size:12px;line-height:14px;color:#d0d0d0;transform:scaleX(0.862);">35</div>
<div class="t" style="left:393.85px;top:798px;font-size:12px;line-height:14px;color:#d0d0d0;transform:scaleX(0.862);">40</div>
<div class="t" style="left:437px;top:798px;font-size:12px;line-height:14px;color:#d0d0d0;transform:scaleX(0.862);">45</div>
<div class="t" style="left:480.15px;top:798px;font-size:12px;line-height:14px;color:#d0d0d0;transform:scaleX(0.862);">50</div>
<div class="t" style="left:523.3px;top:798px;font-size:12px;line-height:14px;color:#d0d0d0;transform:scaleX(0.862);">55</div>
<div class="t" style="left:566.45px;top:798px;font-size:12px;line-height:14px;color:#d0d0d0;transform:scaleX(0.862);">60</div>
<div class="t" style="left:609.6px;top:798px;font-size:12px;line-height:14px;color:#d0d0d0;transform:scaleX(0.862);">65</div>
<div class="t" style="left:652.75px;top:798px;font-size:12px;line-height:14px;color:#d0d0d0;transform:scaleX(0.862);">70</div>
<div class="t" style="left:695.9px;top:798px;font-size:12px;line-height:14px;color:#d0d0d0;transform:scaleX(0.862);">75</div>
<div class="t" style="left:739.05px;top:798px;font-size:12px;line-height:14px;color:#d0d0d0;transform:scaleX(0.862);">80</div>
<div class="t" style="left:782.2px;top:798px;font-size:12px;line-height:14px;color:#d0d0d0;transform:scaleX(0.862);">85</div>
<div class="t" style="left:825.35px;top:798px;font-size:12px;line-height:14px;color:#d0d0d0;transform:scaleX(0.862);">90</div>
<div class="t" style="left:868.5px;top:798px;font-size:12px;line-height:14px;color:#d0d0d0;transform:scaleX(0.862);">95</div>
<div class="a" style="left:48.500px;top:827.500px;width:65.500px;height:15px;background:#2c2c2c;box-shadow:0 0 0 1px #5a5a5a;border-radius:2px"></div>
<div class="t" style="left:53.5px;top:828.5px;font-size:12px;line-height:14px;color:#d0d0d0;transform:scaleX(0.808);">0 F</div>
<svg style="left:106px;top:830px" width="6" height="11" viewBox="0 0 6 11"><path d="M0,4.500 l3,-4 l3,4 Z M0,6.500 l3,4 l3,-4 Z" fill="#a8a8a8"/></svg>
<div class="a" style="left:120.500px;top:827.500px;width:379.500px;height:15.500px;border-radius:4px;background:linear-gradient(#808080,#6c6c6c 50%,#5c5c5c);box-shadow:0 0 0 1px #3a3a3a"></div>
<svg style="left:123px;top:830px" width="10" height="10" viewBox="0 0 10 10"><path d="M9,1.500 v7 l-7.500,-3.500 Z" fill="#d8d8d8"/></svg>
<div class="t" style="left:137px;top:828.5px;font-size:12px;line-height:14px;color:#2e2e2e;transform:scaleX(0.808);">0 F</div>
<div class="t" style="left:462px;top:828.5px;font-size:12px;line-height:14px;color:#2e2e2e;transform:scaleX(0.833);">90 F</div>
<svg style="left:486px;top:830px" width="10" height="10" viewBox="0 0 10 10"><path d="M1,1.500 v7 l7.500,-3.500 Z" fill="#d8d8d8"/></svg>
<div class="a" style="left:506.500px;top:827.500px;width:60px;height:15px;background:#2c2c2c;box-shadow:0 0 0 1px #5a5a5a;border-radius:2px"></div>
<div class="t" style="left:512px;top:828.5px;font-size:12px;line-height:14px;color:#d0d0d0;transform:scaleX(0.833);">90 F</div>
<!-- MATERIALS -->
<div class="a" style="left:40px;top:848px;width:872px;height:1px;background:#6a6a6a;"></div>
<div class="a" style="left:40px;top:849px;width:872px;height:16.5px;background:#2e2e2e;"></div>
<div class="a" style="left:43.500px;top:852px;width:10px;height:10px;background:linear-gradient(135deg,#9a9a9a,#6a6a6a);border:1px solid #555"></div>
<div class="t" style="left:64px;top:849.3px;font-size:13px;line-height:15px;color:#d2d2d2;transform:scaleX(0.800);">Materiales</div>
<div class="a" style="left:40px;top:865.5px;width:872px;height:20.5px;background:#484848;"></div>
<div class="a" style="left:46px;top:870px;width:11px;height:11px;background:repeating-linear-gradient(135deg,#9a9a9a 0,#9a9a9a 1px,#3e3e3e 1px,#3e3e3e 2.200px)"></div>
<div class="t" style="left:65.5px;top:867.8px;font-size:13px;line-height:15px;color:#d2d2d2;transform:scaleX(0.842);">Archivo</div>
<div class="t" style="left:116.5px;top:867.8px;font-size:13px;line-height:15px;color:#d2d2d2;transform:scaleX(0.809);">Edición</div>
<div class="t" style="left:165px;top:867.8px;font-size:13px;line-height:15px;color:#d2d2d2;transform:scaleX(0.821);">Función</div>
<div class="t" style="left:217.5px;top:867.8px;font-size:13px;line-height:15px;color:#d2d2d2;transform:scaleX(0.833);">Textura</div>
<div class="a" style="left:40px;top:886px;width:872px;height:1px;background:#6a6a6a;"></div>
<div class="a" style="left:40px;top:887px;width:872px;height:84px;background:#484848;"></div>
<div class="a" style="left:40px;top:866px;width:1px;height:105px;background:#6a6a6a;"></div>
<div class="a" style="left:40px;top:974px;width:1px;height:19px;background:#6a6a6a;"></div>
<div class="a" style="left:40px;top:970.5px;width:872px;height:1.5px;background:#3a3a3a;"></div>
<div class="a" style="left:40px;top:973.5px;width:872px;height:1px;background:#5e5e5e;"></div>
<div class="a" style="left:44px;top:979px;width:11px;height:11px;background:repeating-linear-gradient(135deg,#9a9a9a 0,#9a9a9a 1px,#3e3e3e 1px,#3e3e3e 2.200px)"></div>
<!-- OVERLAY TEXT -->
<svg style="left:0;top:0" width="1280" height="400" viewBox="0 0 1280 400"><g fill="#fff"><g transform="translate(804.20,199.00)"><rect x="2.05" y="-36.25" width="33.75" height="6.00"/><rect x="2.05" y="-36.25" width="6.00" height="13.75"/><rect x="29.80" y="-36.25" width="6.00" height="13.75"/><rect x="15.40" y="-36.25" width="8.00" height="36.25"/><rect x="8.30" y="-6.00" width="21.50" height="6.00"/></g><g transform="translate(842.48,199.00)"><rect x="6.00" y="-16.50" width="29.20" height="5.50"/><path d="M31.95,-15 A12.6,11.3 0 1,0 22.6,-3.05 Q28.5,-2.7 33.4,-5.3" fill="none" stroke="#fff" stroke-width="6.20" stroke-linecap="butt" stroke-linejoin="round"/></g><g transform="translate(880.76,199.00)"><rect x="1.75" y="-27.40" width="13.25" height="5.60"/><rect x="24.00" y="-27.40" width="13.20" height="5.60"/><rect x="1.75" y="-5.60" width="13.25" height="5.60"/><rect x="24.00" y="-5.60" width="13.20" height="5.60"/><path d="M8.8,-24.6 L30.2,-2.8 M30.2,-24.6 L8.8,-2.8" fill="none" stroke="#fff" stroke-width="7.00" stroke-linecap="butt" stroke-linejoin="miter"/></g><g transform="translate(919.04,199.00)"><rect x="9.20" y="-36.20" width="6.40" height="24.20"/><rect x="5.00" y="-28.00" width="25.00" height="6.40"/><path d="M12.4,-13 C12.4,-5 16,-2.8 21,-2.8 C26,-2.8 30,-4.5 33,-7.5" fill="none" stroke="#fff" stroke-width="6.40" stroke-linecap="round" stroke-linejoin="miter"/></g><g transform="translate(957.32,199.00)"><ellipse cx="18.80" cy="-14.00" rx="13.10" ry="11.45" fill="none" stroke="#fff" stroke-width="6.60"/></g><g transform="translate(1033.88,199.00)"><path d="M29.82,-27.74 A13.1,15.5 0 1,0 23.98,-3.63 Q29.5,-4.2 32.6,-8.6" fill="none" stroke="#fff" stroke-width="6.60" stroke-linecap="round" stroke-linejoin="round"/><rect x="28.85" y="-37.00" width="6.25" height="15.00"/></g><g transform="translate(1072.16,199.00)"><ellipse cx="17.80" cy="-18.20" rx="13.60" ry="15.60" fill="none" stroke="#fff" stroke-width="6.60"/></g><g transform="translate(1110.44,199.00)"><rect x="2.60" y="-36.25" width="6.30" height="36.25"/><rect x="27.25" y="-36.25" width="6.25" height="36.25"/><rect x="-1.10" y="-36.25" width="10.00" height="6.00"/><rect x="27.25" y="-36.25" width="9.75" height="6.00"/><rect x="-1.10" y="-5.90" width="15.85" height="5.90"/><rect x="21.40" y="-5.90" width="15.60" height="5.90"/><polygon points="4.50,-36.25 12.30,-36.25 18.05,-17.00 23.80,-36.25 31.60,-36.25 21.60,-7.75 14.50,-7.75"/></g><g transform="translate(1148.72,199.00)"><rect x="5.00" y="-36.25" width="6.90" height="23.25"/><rect x="25.00" y="-36.25" width="6.90" height="23.25"/><rect x="-0.60" y="-36.25" width="16.90" height="5.75"/><rect x="20.00" y="-36.25" width="17.50" height="5.75"/><path d="M8.45,-13.5 C8.45,-6 12,-2.7 18.45,-2.7 C25,-2.7 28.45,-6 28.45,-13.5" fill="none" stroke="#fff" stroke-width="6.90" stroke-linecap="butt" stroke-linejoin="miter"/></g><g transform="translate(1187.00,199.00)"><rect x="3.90" y="-36.35" width="6.00" height="36.35"/><rect x="25.70" y="-36.35" width="6.05" height="36.35"/><rect x="-1.10" y="-36.35" width="11.00" height="6.05"/><rect x="19.70" y="-36.35" width="16.60" height="6.05"/><rect x="-1.10" y="-6.00" width="17.00" height="6.00"/><polygon points="3.90,-36.35 12.20,-36.35 31.75,-3.00 31.75,0.00 24.00,0.00 3.90,-33.00"/></g><g transform="translate(1225.28,199.00)"><polygon points="13.70,-10.60 23.00,-10.60 15.90,6.30 8.70,6.30"/></g><g transform="translate(765.92,275.00)"><rect x="26.80" y="-39.40" width="6.30" height="39.40"/><rect x="19.10" y="-39.40" width="14.00" height="5.60"/><rect x="26.80" y="-6.00" width="10.80" height="6.00"/><ellipse cx="16.30" cy="-13.95" rx="10.50" ry="11.35" fill="none" stroke="#fff" stroke-width="6.40"/></g><g transform="translate(804.20,275.00)"><rect x="6.00" y="-16.50" width="29.20" height="5.50"/><path d="M31.95,-15 A12.6,11.3 0 1,0 22.6,-3.05 Q28.5,-2.7 33.4,-5.3" fill="none" stroke="#fff" stroke-width="6.20" stroke-linecap="butt" stroke-linejoin="round"/></g><g transform="translate(842.48,275.00)"><rect x="1.30" y="-27.75" width="11.20" height="5.75"/><rect x="6.30" y="-27.75" width="6.20" height="39.00"/><rect x="1.30" y="5.25" width="20.00" height="6.00"/><ellipse cx="22.70" cy="-13.95" rx="10.10" ry="11.35" fill="none" stroke="#fff" stroke-width="6.40"/></g><g transform="translate(880.76,275.00)"><rect x="6.00" y="-16.50" width="29.20" height="5.50"/><path d="M31.95,-15 A12.6,11.3 0 1,0 22.6,-3.05 Q28.5,-2.7 33.4,-5.3" fill="none" stroke="#fff" stroke-width="6.20" stroke-linecap="butt" stroke-linejoin="round"/></g><g transform="translate(919.04,275.00)"><rect x="1.60" y="-27.75" width="10.00" height="5.75"/><rect x="6.00" y="-27.75" width="5.60" height="27.75"/><rect x="1.60" y="-6.00" width="15.90" height="6.00"/><rect x="25.30" y="-15.00" width="6.30" height="15.00"/><rect x="21.00" y="-6.00" width="16.00" height="6.00"/><path d="M8.8,-15 C8.8,-22 14,-25.3 19.5,-25.3 C25.5,-25.3 28.45,-21 28.45,-14.5" fill="none" stroke="#fff" stroke-width="6.40" stroke-linecap="butt" stroke-linejoin="miter"/></g><g transform="translate(957.32,275.00)"><rect x="26.80" y="-39.40" width="6.30" height="39.40"/><rect x="19.10" y="-39.40" width="14.00" height="5.60"/><rect x="26.80" y="-6.00" width="10.80" height="6.00"/><ellipse cx="16.30" cy="-13.95" rx="10.50" ry="11.35" fill="none" stroke="#fff" stroke-width="6.40"/></g><g transform="translate(995.60,275.00)"><rect x="6.00" y="-16.50" width="29.20" height="5.50"/><path d="M31.95,-15 A12.6,11.3 0 1,0 22.6,-3.05 Q28.5,-2.7 33.4,-5.3" fill="none" stroke="#fff" stroke-width="6.20" stroke-linecap="butt" stroke-linejoin="round"/></g><g transform="translate(1072.16,275.00)"><rect x="26.80" y="-39.40" width="6.30" height="39.40"/><rect x="19.10" y="-39.40" width="14.00" height="5.60"/><rect x="26.80" y="-6.00" width="10.80" height="6.00"/><ellipse cx="16.30" cy="-13.95" rx="10.50" ry="11.35" fill="none" stroke="#fff" stroke-width="6.40"/></g><g transform="translate(1110.44,275.00)"><rect x="6.00" y="-16.50" width="29.20" height="5.50"/><path d="M31.95,-15 A12.6,11.3 0 1,0 22.6,-3.05 Q28.5,-2.7 33.4,-5.3" fill="none" stroke="#fff" stroke-width="6.20" stroke-linecap="butt" stroke-linejoin="round"/></g><g transform="translate(1187.00,275.00)"><rect x="3.90" y="-39.60" width="16.90" height="6.00"/><rect x="14.25" y="-39.60" width="6.55" height="39.60"/><rect x="3.30" y="-6.00" width="27.60" height="6.00"/></g><g transform="translate(1225.28,275.00)"><rect x="23.50" y="-18.00" width="6.00" height="18.00"/><rect x="23.50" y="-6.00" width="11.20" height="6.00"/><path d="M6.3,-21 C9,-24.8 13,-25.6 17,-25.6 C23,-25.6 26.5,-22.5 26.5,-16.5" fill="none" stroke="#fff" stroke-width="6.30" stroke-linecap="round" stroke-linejoin="miter"/><path d="M26,-17 C14,-16.5 4.8,-13.5 4.8,-7.8 C4.8,-4.3 8,-2.3 12.5,-2.3 C18,-2.3 23,-5 26,-9" fill="none" stroke="#fff" stroke-width="5.800"/></g><g transform="translate(995.60,351.00)"><rect x="3.40" y="-36.20" width="31.70" height="6.00"/><rect x="29.20" y="-36.20" width="5.90" height="13.10"/><rect x="8.10" y="-36.20" width="6.00" height="36.20"/><rect x="14.10" y="-18.20" width="12.60" height="6.00"/><rect x="20.60" y="-25.30" width="6.10" height="13.70"/><rect x="3.40" y="-6.20" width="18.10" height="6.20"/></g><g transform="translate(1033.88,351.00)"><rect x="0.40" y="-27.50" width="11.50" height="6.00"/><rect x="5.50" y="-27.50" width="6.40" height="16.50"/><rect x="24.80" y="-27.50" width="6.20" height="27.50"/><rect x="20.10" y="-27.50" width="10.90" height="6.00"/><rect x="24.80" y="-6.20" width="10.60" height="6.20"/><path d="M8.7,-12 C8.7,-5 12,-2.8 17,-2.8 C23,-2.8 27.9,-6 27.9,-12" fill="none" stroke="#fff" stroke-width="6.40" stroke-linecap="butt" stroke-linejoin="miter"/></g><g transform="translate(1072.16,351.00)"><rect x="6.00" y="-16.50" width="29.20" height="5.50"/><path d="M31.95,-15 A12.6,11.3 0 1,0 22.6,-3.05 Q28.5,-2.7 33.4,-5.3" fill="none" stroke="#fff" stroke-width="6.20" stroke-linecap="butt" stroke-linejoin="round"/></g><g transform="translate(1110.44,351.00)"><rect x="1.60" y="-27.75" width="10.00" height="5.75"/><rect x="6.00" y="-27.75" width="5.60" height="27.75"/><rect x="1.60" y="-6.00" width="15.90" height="6.00"/><rect x="25.30" y="-15.00" width="6.30" height="15.00"/><rect x="21.00" y="-6.00" width="16.00" height="6.00"/><path d="M8.8,-15 C8.8,-22 14,-25.3 19.5,-25.3 C25.5,-25.3 28.45,-21 28.45,-14.5" fill="none" stroke="#fff" stroke-width="6.40" stroke-linecap="butt" stroke-linejoin="miter"/></g><g transform="translate(1147.52,351.00)"><rect x="9.20" y="-36.20" width="6.40" height="24.20"/><rect x="5.00" y="-28.00" width="25.00" height="6.40"/><path d="M12.4,-13 C12.4,-5 16,-2.8 21,-2.8 C26,-2.8 30,-4.5 33,-7.5" fill="none" stroke="#fff" stroke-width="6.40" stroke-linecap="round" stroke-linejoin="miter"/></g><g transform="translate(1185.40,351.00)"><rect x="6.00" y="-16.50" width="29.20" height="5.50"/><path d="M31.95,-15 A12.6,11.3 0 1,0 22.6,-3.05 Q28.5,-2.7 33.4,-5.3" fill="none" stroke="#fff" stroke-width="6.20" stroke-linecap="butt" stroke-linejoin="round"/></g><g transform="translate(1225.28,351.00)"> <circle cx="17.700" cy="-4.500" r="6.300"/></g></g></svg>
<!-- DIALOG -->
<div class="a" style="left:531px;top:630.500px;width:437px;height:348.500px;background:#0840d8;border-radius:7px 7px 0 0"></div>
<div class="a" style="left:531px;top:630.500px;width:437px;height:29px;border-radius:7px 7px 0 0;background:linear-gradient(#0a44d0 0,#3a8cf8 1px,#2a80f4 2.500px,#0058e6 4px,#0052e0 8px,#0054e4 14px,#0062f6 20px,#0068fc 25px,#0058e8 26.500px,#0030c0 27.500px,#0030c0 29px)"></div>
<div class="a" style="left:534.5px;top:659.5px;width:430px;height:316px;background:#ece9d8;"></div>
<div class="t" style="left:538.5px;top:638.5px;font-size:14px;line-height:16px;color:#fff;font-weight:bold;transform:scaleX(0.905);text-shadow:1px 1px 0 #0a2a80;">Fuente</div>
<div class="a" style="left:919.500px;top:635px;width:21px;height:21px;border:1px solid #fff;border-radius:3.500px;background:linear-gradient(135deg,#5a8af0,#2a5ee0 50%,#2250cc)"></div>
<div class="a" style="left:919.500px;top:635px;width:21px;height:21px;text-align:center;font-weight:bold;font-size:17px;line-height:21px;color:#fff">?</div>
<div class="a" style="left:942.500px;top:635px;width:21px;height:21px;border:1px solid #fff;border-radius:3.500px;background:linear-gradient(135deg,#f08a6a,#e04a28 50%,#c83818)"></div>
<svg style="left:942.500px;top:635px" width="21" height="21" viewBox="0 0 21 21"><path d="M5.500,5.500 L15.500,15.500 M15.500,5.500 L5.500,15.500" stroke="#fff" stroke-width="2.400"/></svg>
<div class="t" style="left:545.5px;top:670px;font-size:12px;line-height:14px;color:#000;transform:scaleX(0.873);">Fuente:</div>
<div class="t" style="left:699px;top:670px;font-size:12px;line-height:14px;color:#000;transform:scaleX(0.878);">Estilo de fuente:</div>
<div class="t" style="left:819px;top:670px;font-size:12px;line-height:14px;color:#000;transform:scaleX(0.891);">Tamaño:</div>
<div class="a" style="left:545.5px;top:685.5px;width:145.5px;height:19.5px;background:#fff;border:1px solid;border-color:#9a988c #fff #fff #9a988c;box-shadow:inset 1px 1px 0 #6e6c62,inset -1px -1px 0 #e4e1d2"></div>
<div class="a" style="left:699px;top:685.5px;width:110.5px;height:19.5px;background:#fff;border:1px solid;border-color:#9a988c #fff #fff #9a988c;box-shadow:inset 1px 1px 0 #6e6c62,inset -1px -1px 0 #e4e1d2"></div>
<div class="a" style="left:819px;top:685.5px;width:53px;height:19.5px;background:#fff;border:1px solid;border-color:#9a988c #fff #fff #9a988c;box-shadow:inset 1px 1px 0 #6e6c62,inset -1px -1px 0 #e4e1d2"></div>
<div class="a" style="left:548px;top:688px;width:73.5px;height:13.5px;background:#316ac5;"></div>
<div class="t" style="left:549px;top:688px;font-size:12px;line-height:14px;color:#fff;transform:scaleX(0.864);">Lucida Console</div>
<div class="t" style="left:702px;top:688px;font-size:12px;line-height:14px;color:#000;transform:scaleX(0.866);">Normal</div>
<div class="t" style="left:822.5px;top:688px;font-size:12px;line-height:14px;color:#000;transform:scaleX(0.899);">22</div>
<div class="a" style="left:545.5px;top:706.5px;width:145.5px;height:94px;background:#fff;border:1px solid;border-color:#9a988c #fff #fff #9a988c;box-shadow:inset 1px 1px 0 #6e6c62,inset -1px -1px 0 #e4e1d2"></div>
<div class="a" style="left:699px;top:706.5px;width:110.5px;height:94px;background:#fff;border:1px solid;border-color:#9a988c #fff #fff #9a988c;box-shadow:inset 1px 1px 0 #6e6c62,inset -1px -1px 0 #e4e1d2"></div>
<div class="a" style="left:819px;top:706.5px;width:53px;height:94px;background:#fff;border:1px solid;border-color:#9a988c #fff #fff #9a988c;box-shadow:inset 1px 1px 0 #6e6c62,inset -1px -1px 0 #e4e1d2"></div>
<div class="a" style="left:547.5px;top:708.5px;width:126px;height:13px;background:#316ac5;"></div>
<div class="a" style="left:701px;top:708.5px;width:106.5px;height:13px;background:#316ac5;"></div>
<div class="a" style="left:821px;top:708.5px;width:33.5px;height:13px;background:#316ac5;"></div>
<div class="t" style="left:567.5px;top:708px;font-size:12px;line-height:14px;color:#fff;transform:scaleX(0.870);">Lucida Console</div>
<div class="a" style="left:552px;top:708px;width:12px;height:13px;font-family:'Liberation Serif',serif;font-style:italic;font-weight:bold;font-size:15px;line-height:13px;color:#8a1088;text-shadow:1px 0 0 #6a6a9a">O</div>
<div class="t" style="left:567.5px;top:721px;font-size:12px;line-height:14px;color:#000;transform:scaleX(0.900);">Lucida Sans Unicode</div>
<div class="a" style="left:552px;top:721px;width:12px;height:13px;font-family:'Liberation Serif',serif;font-style:italic;font-weight:bold;font-size:15px;line-height:13px;color:#0a0a0a;text-shadow:1px 0 0 #208080">O</div>
<div class="t" style="left:567.5px;top:734px;font-size:12px;line-height:14px;color:#000;transform:scaleX(0.889);">Mangal</div>
<div class="a" style="left:552px;top:734px;width:12px;height:13px;font-family:'Liberation Serif',serif;font-style:italic;font-weight:bold;font-size:15px;line-height:13px;color:#0a0a0a;text-shadow:1px 0 0 #208080">O</div>
<div class="t" style="left:567.5px;top:747px;font-size:12px;line-height:14px;color:#000;transform:scaleX(0.873);">Marlett</div>
<div class="a" style="left:552px;top:747px;width:12px;height:13px;font-family:'Liberation Serif',serif;font-style:italic;font-weight:bold;font-size:15px;line-height:13px;color:#0a0a0a;text-shadow:1px 0 0 #208080">O</div>
<div class="t" style="left:567.5px;top:760px;font-size:12px;line-height:14px;color:#000;transform:scaleX(0.890);">Microsoft Sans Serif</div>
<div class="a" style="left:552px;top:760px;width:12px;height:13px;font-family:'Liberation Serif',serif;font-style:italic;font-weight:bold;font-size:15px;line-height:13px;color:#0a0a0a;text-shadow:1px 0 0 #208080">O</div>
<div class="t" style="left:567.5px;top:773px;font-size:12px;line-height:14px;color:#000;transform:scaleX(0.897);">Modern</div>
<div class="t" style="left:567.5px;top:786px;font-size:12px;line-height:14px;color:#000;transform:scaleX(0.871);">MV Boli</div>
<div class="a" style="left:552px;top:786px;width:12px;height:13px;font-family:'Liberation Serif',serif;font-style:italic;font-weight:bold;font-size:15px;line-height:13px;color:#0a0a0a;text-shadow:1px 0 0 #208080">O</div>
<div class="t" style="left:703px;top:708px;font-size:12px;line-height:14px;color:#fff;transform:scaleX(0.853);">Normal</div>
<div class="t" style="left:703px;top:721px;font-size:12px;line-height:14px;color:#000;transform:scaleX(0.823);">Cursiva</div>
<div class="t" style="left:703px;top:734px;font-size:12px;line-height:14px;color:#000;transform:scaleX(0.866);">Negrita</div>
<div class="t" style="left:703px;top:747px;font-size:12px;line-height:14px;color:#000;transform:scaleX(0.887);">Negrita cursiva</div>
<div class="t" style="left:822.5px;top:708px;font-size:12px;line-height:14px;color:#fff;transform:scaleX(0.862);">22</div>
<div class="t" style="left:822.5px;top:721px;font-size:12px;line-height:14px;color:#000;transform:scaleX(0.862);">24</div>
<div class="t" style="left:822.5px;top:734px;font-size:12px;line-height:14px;color:#000;transform:scaleX(0.862);">26</div>
<div class="t" style="left:822.5px;top:747px;font-size:12px;line-height:14px;color:#000;transform:scaleX(0.862);">28</div>
<div class="t" style="left:822.5px;top:760px;font-size:12px;line-height:14px;color:#000;transform:scaleX(0.862);">36</div>
<div class="t" style="left:822.5px;top:773px;font-size:12px;line-height:14px;color:#000;transform:scaleX(0.862);">48</div>
<div class="t" style="left:822.5px;top:786px;font-size:12px;line-height:14px;color:#000;transform:scaleX(0.862);">72</div>
<div class="a" style="left:673.5px;top:708.5px;width:16px;height:90.5px;background:linear-gradient(90deg,#eeede5,#fefefb);"></div><div class="a" style="left:673.5px;top:708.500px;width:16px;height:15.500px;border:1px solid #fff;border-radius:2px;background:linear-gradient(135deg,#e0e8fc,#c2d2fa 60%,#b0c4f4);box-shadow:0 0 0 .500px #9ab0e8"></div><div class="a" style="left:673.5px;top:783.500px;width:16px;height:15.500px;border:1px solid #fff;border-radius:2px;background:linear-gradient(135deg,#e0e8fc,#c2d2fa 60%,#b0c4f4);box-shadow:0 0 0 .500px #9ab0e8"></div><div class="a" style="left:673.5px;top:743.5px;width:16px;height:11px;border:1px solid #fff;border-radius:2px;background:linear-gradient(135deg,#e0e8fc,#c2d2fa 60%,#b0c4f4);box-shadow:0 0 0 .500px #9ab0e8"></div><svg style="left:673.5px;top:708.500px" width="16" height="91" viewBox="0 0 16 91"><path d="M4.500,10 L8,6.500 L11.500,10 M4.500,81 L8,84.500 L11.500,81" fill="none" stroke="#4d6185" stroke-width="2"/></svg>
<div class="a" style="left:855.5px;top:708.5px;width:16px;height:90.5px;background:linear-gradient(90deg,#eeede5,#fefefb);"></div><div class="a" style="left:855.5px;top:708.500px;width:16px;height:15.500px;border:1px solid #fff;border-radius:2px;background:linear-gradient(135deg,#e0e8fc,#c2d2fa 60%,#b0c4f4);box-shadow:0 0 0 .500px #9ab0e8"></div><div class="a" style="left:855.5px;top:783.500px;width:16px;height:15.500px;border:1px solid #fff;border-radius:2px;background:linear-gradient(135deg,#e0e8fc,#c2d2fa 60%,#b0c4f4);box-shadow:0 0 0 .500px #9ab0e8"></div><div class="a" style="left:855.5px;top:758.5px;width:16px;height:22px;border:1px solid #fff;border-radius:2px;background:linear-gradient(135deg,#e0e8fc,#c2d2fa 60%,#b0c4f4);box-shadow:0 0 0 .500px #9ab0e8"></div><svg style="left:855.5px;top:708.500px" width="16" height="91" viewBox="0 0 16 91"><path d="M4.500,10 L8,6.500 L11.500,10 M4.500,81 L8,84.500 L11.500,81" fill="none" stroke="#4d6185" stroke-width="2"/><path d="M5.500,58 h5 M5.500,60 h5 M5.500,62 h5 M5.500,64 h5" stroke="#8aa0dc" stroke-width="1"/></svg>
<div class="a" style="left:881px;top:685px;width:68px;height:23px;background:#ece9d8;border:1px solid #000;box-shadow:inset 1px 1px 0 #fff,inset -1px -1px 0 #404040,inset -2px -2px 0 #aca899"></div>
<div class="t" style="left:895.5px;top:689.5px;font-size:12px;line-height:14px;color:#000;transform:scaleX(0.919);">Aceptar</div>
<div class="a" style="left:881px;top:711.500px;width:68px;height:22.500px;background:#ece9d8;border:1px solid;border-color:#fff #404040 #404040 #fff;box-shadow:inset -1px -1px 0 #aca899"></div>
<div class="t" style="left:894.5px;top:715.5px;font-size:12px;line-height:14px;color:#000;transform:scaleX(0.854);">Cancelar</div>
<div class="a" style="left:699px;top:823.500px;width:173px;height:63px;border:1px solid #aca899;box-shadow:1px 1px 0 #fff,inset 1px 1px 0 #fff"></div>
<div class="a" style="left:706px;top:818px;width:42px;height:12px;background:#ece9d8;"></div>
<div class="t" style="left:708.5px;top:817.5px;font-size:12px;line-height:14px;color:#000;transform:scaleX(0.853);">Ejemplo</div>
<div class="a" style="left:711px;top:839.5px;width:150px;height:36.5px;background:#ece9d8;border:1px solid;border-color:#9a988c #fff #fff #9a988c;box-shadow:inset 1px 1px 0 #6e6c62,inset -1px -1px 0 #e4e1d2"></div>
<svg style="left:711px;top:839px" width="150" height="37" viewBox="711 839 150 37"><text x="717.500" y="869" font-family="'Liberation Mono',monospace" font-size="28" fill="#000" stroke="#000" stroke-width=".350" textLength="136" lengthAdjust="spacingAndGlyphs">AaBbYyZz</text></svg>
<div class="t" style="left:699px;top:898px;font-size:12px;line-height:14px;color:#000;transform:scaleX(0.877);">Alfabeto:</div>
<div class="a" style="left:699px;top:915px;width:173px;height:19px;background:#fff;border:1px solid;border-color:#9a988c #fff #fff #9a988c;box-shadow:inset 1px 1px 0 #6e6c62,inset -1px -1px 0 #e4e1d2"></div>
<div class="t" style="left:703px;top:917.5px;font-size:12px;line-height:14px;color:#000;transform:scaleX(0.900);">Occidental</div>
<div class="a" style="left:854px;top:917px;width:16px;height:15px;background:#ece9d8;border:1px solid;border-color:#fff #404040 #404040 #fff;box-shadow:inset -1px -1px 0 #aca899"></div>
<svg style="left:858px;top:922px" width="8" height="5" viewBox="0 0 8 5"><path d="M0.500,0.500 h7 l-3.500,4 Z" fill="#000"/></svg>
<!-- TASKBAR -->
<div class="a" style="left:0;top:994px;width:1280px;height:30px;background:linear-gradient(#2a62dc 0,#3a80f2 2px,#2a66e4 5px,#245cdc 10px,#2258d6 22px,#1c48b8 30px)"></div>
<div class="a" style="left:0;top:994px;width:101px;height:30px;border-radius:0 12px 12px 0;background:linear-gradient(#3c8c3c 0,#5cb85c 3px,#3e9a3e 8px,#379237 20px,#2c7a2c 30px);box-shadow:inset -2px 0 3px #2a6a2a,1px 0 2px #1a3a90"></div>
<svg style="left:9px;top:999px" width="21" height="20" viewBox="0 0 21 20"><path d="M2,4 q4,-3 8,-0.500 l-1.500,6.500 q-4,-2.500 -8,0.500 Z" fill="#e8502a"/><path d="M11,4 q4,2 8.500,-0.500 l-1.500,6.500 q-4.500,2.500 -8.500,0.500 Z" fill="#6cc040"/><path d="M0.300,11.500 q4,-3 8,-0.500 l-1.500,6.500 q-4,-2.500 -8,0.500 Z" fill="#3a7af0"/><path d="M9.300,11.500 q4,2 8.500,-0.500 l-1.500,6.500 q-4.500,2.500 -8.500,0.500 Z" fill="#f0c020"/></svg>
<div class="t" style="left:35px;top:998px;font-size:19px;line-height:22px;font-weight:bold;font-style:italic;color:#fff;text-shadow:1px 1px 1px #1a4a1a;transform:scaleX(.880)">Inicio</div>
<svg style="left:110px;top:998px" width="90" height="22" viewBox="110 998 90 22"><rect x="115.500" y="1001.500" width="14" height="15" fill="#1a1a4a" stroke="#e8e0c0" stroke-width="1"/><text x="117" y="1013" font-family="'Liberation Sans'" font-weight="bold" font-size="10" fill="#f0c860">tQ</text><rect x="139.500" y="1001.500" width="12" height="14" rx="2" fill="#d8e8fc" stroke="#3060b0"/><circle cx="146" cy="1008.500" r="4" fill="none" stroke="#2858b0" stroke-width="1.800"/><circle cx="151" cy="1003" r="1.500" fill="#e04040"/><circle cx="169" cy="1009" r="6" fill="none" stroke="#58b0f8" stroke-width="3"/><path d="M162,1011 q8,-12 16,-8" fill="none" stroke="#58b0f8" stroke-width="1.600"/><path d="M164,1009 h10" stroke="#58b0f8" stroke-width="2"/><path d="M188.500,1000 l3,2.500 l-3,2.500 M192.500,1000 l3,2.500 l-3,2.500" fill="none" stroke="#d0e0ff" stroke-width="1"/></svg>
<div class="a" style="left:205px;top:997px;width:158.5px;height:24px;border-radius:3px;background:linear-gradient(#5a98f8 0,#3c80f0 3px,#3678ec 20px,#2c68e0);box-shadow:inset 0 1px 0 #7ab0ff"></div><svg style="left:213px;top:1001px" width="17" height="17" viewBox="0 0 17 17"><circle cx="8.500" cy="9" r="5.500" fill="none" stroke="#70c0ff" stroke-width="3"/><path d="M1,12 q8,-14 15.500,-9" fill="none" stroke="#70c0ff" stroke-width="1.600"/><path d="M4,9 h9.500" stroke="#70c0ff" stroke-width="2"/></svg><div class="t" style="left:243.5px;top:1002.5px;font-size:12px;line-height:14px;color:#fff;transform:scaleX(0.930);">Internet Explorer</div>
<div class="t" style="left:232px;top:1002.5px;font-size:12px;line-height:14px;color:#f8c050;font-weight:bold;transform:scaleX(1.049);">9</div>
<svg style="left:353px;top:1008px" width="7" height="4" viewBox="0 0 7 4"><path d="M0,0 h7 l-3.500,3.500 Z" fill="#fff"/></svg>
<div class="a" style="left:364.5px;top:997px;width:157.5px;height:24px;border-radius:3px;background:linear-gradient(#1a44b0,#1e4cc0 4px,#2050c4);box-shadow:inset 1px 1px 2px #0a2a80"></div><svg style="left:374px;top:1002px" width="16" height="16" viewBox="0 0 17 18"><ellipse cx="8.500" cy="9" rx="8" ry="8.500" fill="#a0a8c0"/><ellipse cx="8.500" cy="9" rx="6.800" ry="7.500" fill="#2a2f48"/><circle cx="8" cy="9" r="5.800" fill="#2848d8"/><ellipse cx="6.500" cy="6.500" rx="2" ry="1.300" fill="#a8b8ff" opacity=".8"/></svg><div class="t" style="left:394.5px;top:1002.5px;font-size:12px;line-height:14px;color:#fff;transform:scaleX(0.897);">CINEMA 4D Studio (3...</div>
<div class="a" style="left:525px;top:997px;width:158.5px;height:24px;border-radius:3px;background:linear-gradient(#5a98f8 0,#3c80f0 3px,#3678ec 20px,#2c68e0);box-shadow:inset 0 1px 0 #7ab0ff"></div><svg style="left:533px;top:1001px" width="17" height="17" viewBox="0 0 17 17"><rect x="0.500" y="0.500" width="16" height="16" fill="#101010" stroke="#c03030"/><path d="M3,10 q5,-7 11,-2 q-5,6 -11,2 Z" fill="#e8e8e8"/><circle cx="8.500" cy="9" r="2" fill="#202020"/></svg><div class="t" style="left:553px;top:1002.5px;font-size:12px;line-height:14px;color:#fff;transform:scaleX(0.891);">Adobe Photoshop</div>
<div class="a" style="left:1188px;top:994px;width:92px;height:30px;background:linear-gradient(#1a9cf0 0,#18a4f4 3px,#1294ea 8px,#0f8ae4 22px,#0c78d0 30px);box-shadow:inset 1px 0 0 #0a3a90,inset 2px 0 0 #30b0f8"></div>
<svg style="left:1196px;top:999px" width="40" height="22" viewBox="0 0 40 22"><ellipse cx="9" cy="10" rx="5.500" ry="7" fill="#8a8a8a" stroke="#444" stroke-width="1"/><ellipse cx="8" cy="10" rx="2.500" ry="3.500" fill="#c8c8d8"/><path d="M11,18 q4,-1 6,-5" fill="none" stroke="#a0a0e8" stroke-width="1"/><path d="M21,16 l8,-4 l4,5 l-8,4 Z" fill="#b8b8b8" stroke="#444" stroke-width=".800"/><path d="M22,7 l5,-4 l0.500,2.500 l4,0 l-1,4 l-4,0.500 l0.500,2.500 Z" fill="#30c020" stroke="#108010" stroke-width=".600"/></svg>
<div class="t" style="left:1239px;top:1002.5px;font-size:12px;line-height:14px;color:#fff;transform:scaleX(0.900);">14:20</div>
</div></body></html>
